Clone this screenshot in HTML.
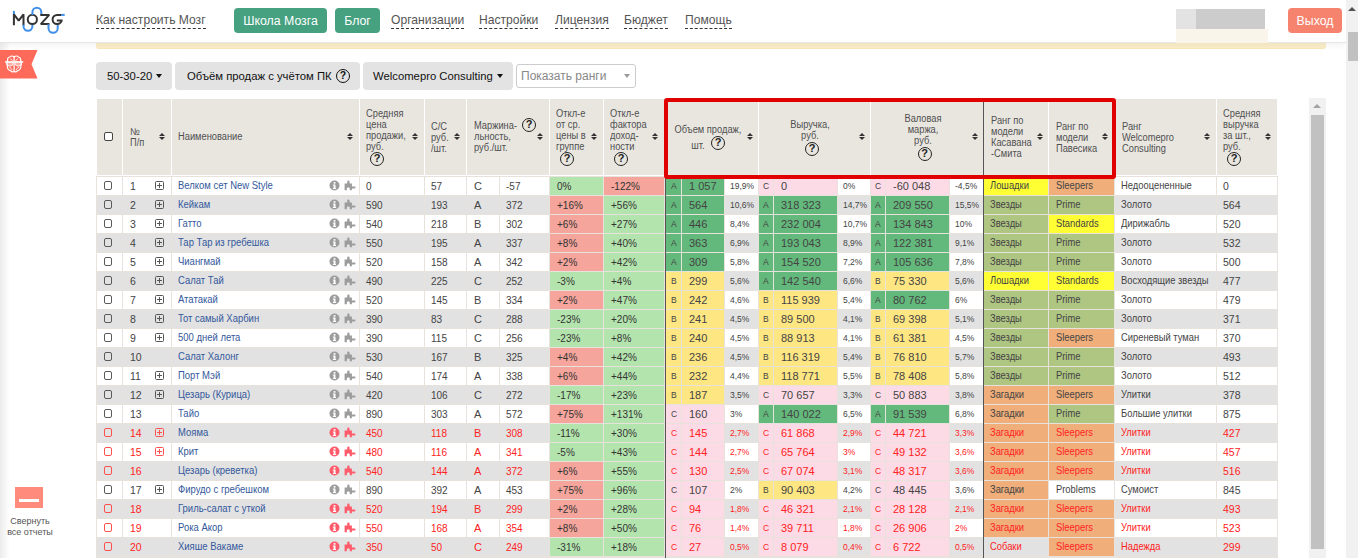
<!DOCTYPE html><html><head><meta charset="utf-8"><style>
*{margin:0;padding:0;box-sizing:border-box}
html,body{width:1358px;height:558px;overflow:hidden;background:#fff;font-family:"Liberation Sans", sans-serif;color:#444}
div{position:absolute}
.t{white-space:nowrap;line-height:1}
.q{width:14px;height:14px;border:1.4px solid #222;border-radius:50%;font-size:11px;font-weight:bold;line-height:11px;text-align:center;color:#222}
.s{width:7px;height:8px}
.s .su,.s .sd{position:absolute;left:0.5px;width:0;height:0;border-left:3px solid transparent;border-right:3px solid transparent}
.s .su{top:0;border-bottom:3.5px solid #333}
.s .sd{top:4px;border-top:3.5px solid #333}
.hd{font-size:10px;line-height:11px;color:#505050;white-space:nowrap;transform:scaleX(0.93);transform-origin:0 0}
.hdc{transform-origin:50% 0}
.cell{white-space:nowrap;line-height:19px}
</style></head><body>
<div style="position:absolute;left:0px;top:0px;width:1346px;height:43px;background:#fff;border-bottom:1px solid #e6e6e6;box-shadow:0 2px 7px rgba(0,0,0,0.06);z-index:5"></div>
<svg style="position:absolute;left:0;top:0;z-index:6" width="72" height="40" viewBox="0 0 72 40">
<g fill="none" stroke-linecap="butt" stroke-linejoin="miter" stroke-miterlimit="1.5">
<path d="M13.9 10.9 V14.6" stroke="#3f8fe8" stroke-width="2"/>
<path d="M13.9 25.2 V14.3 L18.7 20.6 L23.5 14.3 V25.2" stroke="#333" stroke-width="2"/>
<path d="M23.5 24.8 V26.3 A4.45 4.45 0 0 0 32.4 26.3 V24.2" stroke="#3f8fe8" stroke-width="2"/>
<circle cx="32.35" cy="19.45" r="4.6" stroke="#333" stroke-width="2"/>
<path d="M32.4 14.9 V12.2 A4.45 4.45 0 0 1 41.3 12.2 V15" stroke="#3f8fe8" stroke-width="2"/>
<path d="M40.3 14.9 H49.2 L40.8 24.1 H49.5" stroke="#333" stroke-width="2"/>
<path d="M48.5 24.2 V28.2 A4.6 4.6 0 0 0 57.7 28.2 V24" stroke="#3f8fe8" stroke-width="2"/>
<path d="M61.2 14.9 H57.1 A4.5 4.6 0 0 0 57.1 24.1 A4.5 4.6 0 0 0 61.6 19.5 V20.6 H56.8" stroke="#333" stroke-width="2"/>
<path d="M61 14.9 H64.7" stroke="#3f8fe8" stroke-width="2"/>
</g></svg>
<div class="t" style="left:96px;top:14px;font-size:12.1px;color:#555;z-index:6;border-bottom:1px dashed #333;padding-bottom:1px;line-height:13px">Как настроить Мозг</div>
<div style="position:absolute;left:234px;top:8px;width:93px;height:25px;background:#45a17f;border-radius:4px;z-index:6;color:#fff;font-size:12.3px;line-height:27px;text-align:center">Школа Мозга</div>
<div style="position:absolute;left:335px;top:8px;width:45px;height:25px;background:#45a17f;border-radius:4px;z-index:6;color:#fff;font-size:12.3px;line-height:27px;text-align:center">Блог</div>
<div class="t" style="left:391px;top:14px;font-size:12.1px;color:#555;z-index:6;border-bottom:1px dashed #333;padding-bottom:1px;line-height:13px">Организации</div>
<div class="t" style="left:479px;top:14px;font-size:12.1px;color:#555;z-index:6;border-bottom:1px dashed #333;padding-bottom:1px;line-height:13px">Настройки</div>
<div class="t" style="left:555px;top:14px;font-size:12.1px;color:#555;z-index:6;border-bottom:1px dashed #333;padding-bottom:1px;line-height:13px">Лицензия</div>
<div class="t" style="left:624px;top:14px;font-size:12.1px;color:#555;z-index:6;border-bottom:1px dashed #333;padding-bottom:1px;line-height:13px">Бюджет</div>
<div class="t" style="left:685px;top:14px;font-size:12.1px;color:#555;z-index:6;border-bottom:1px dashed #333;padding-bottom:1px;line-height:13px">Помощь</div>
<div style="position:absolute;left:1176px;top:9px;width:20px;height:20px;background:#e3e3e3;z-index:6"></div>
<div style="position:absolute;left:1196px;top:9px;width:69px;height:20px;background:#cccccc;z-index:6"></div>
<div style="position:absolute;left:1176px;top:29px;width:92px;height:16px;background:#faf5ea;z-index:6"></div>
<div style="position:absolute;left:1288px;top:8px;width:54px;height:25px;background:#f6836e;border-radius:4px;z-index:6;color:#fff;font-size:12.3px;line-height:27px;text-align:center">Выход</div>
<div style="position:absolute;left:0px;top:42px;width:10px;height:516px;background:linear-gradient(to right,#ececec,#fff)"></div>
<svg style="position:absolute;left:0;top:50px" width="38" height="29" viewBox="0 50 38 29">
<path d="M0 50 H37.5 L31.5 64.2 L37.5 78.5 H0 Z" fill="#fd6a5a"/>
<g fill="none" stroke="#fff" stroke-width="1.2">
<path d="M14.1 57 C13 55.8 10.8 55.6 9.8 57 C8.2 57.2 7.4 58.6 7.6 60.3 C6.8 61.3 6.6 63.8 7.3 65.6 C7.2 68.3 8.7 70.6 10.8 70.8 C12 72.2 13.4 72 14.1 71.3 C14.8 72 16.2 72.2 17.4 70.8 C19.5 70.6 21 68.3 20.9 65.6 C21.6 63.8 21.4 61.3 20.6 60.3 C20.8 58.6 20 57.2 18.4 57 C17.4 55.6 15.2 55.8 14.1 57 Z"/>
<path d="M14.1 57 V71.3"/>
<path d="M10.3 58.9 C11.5 59.1 12.2 59.9 12.4 61.1" stroke-width="0.9"/>
<path d="M17.9 58.9 C16.7 59.1 16 59.9 15.8 61.1" stroke-width="0.9"/>
<path d="M9.3 67.4 C10.7 67.6 11.7 68.7 11.9 70.1" stroke-width="0.9"/>
<path d="M18.9 67.4 C17.5 67.6 16.5 68.7 16.3 70.1" stroke-width="0.9"/>
<path d="M6.9 61.9 H12.9 V63.6 A2.4 2.4 0 0 1 10.5 66 H9.3 A2.4 2.4 0 0 1 6.9 63.6 Z" fill="#fff" fill-opacity="0.45" stroke-width="0.9"/>
<path d="M15.3 61.9 H21.3 V63.6 A2.4 2.4 0 0 1 18.9 66 H17.7 A2.4 2.4 0 0 1 15.3 63.6 Z" fill="#fff" fill-opacity="0.45" stroke-width="0.9"/>
<path d="M5 62 H23.3" stroke-width="1.4"/>
</g></svg>
<div style="position:absolute;left:15px;top:487px;width:28px;height:21px;background:#fe8b7c"></div>
<div style="position:absolute;left:19px;top:499px;width:20px;height:3px;background:#fff"></div>
<div style="left:5px;top:515px;width:50px;font-size:9.8px;line-height:11px;color:#555;text-align:center;transform:scaleX(0.92);transform-origin:50% 0">Свернуть<br>все отчеты</div>
<div style="position:absolute;left:96px;top:43px;width:1230px;height:6px;background:linear-gradient(#f1e4c0,#f8ebc6);border-bottom:1px solid #f5e6b8;border-radius:0 0 3px 3px;z-index:6"></div>
<div style="left:96px;top:62px;width:76px;height:28px;background:#e3e3e3;border-radius:4px;font-size:11.3px;line-height:28px;color:#111;white-space:nowrap"><span style="position:absolute;left:11px">50-30-20<span style="display:inline-block;width:0;height:0;border-left:3.5px solid transparent;border-right:3.5px solid transparent;border-top:4px solid #111;vertical-align:middle;margin-left:4px;margin-top:-2px"></span></span></div>
<div style="left:175px;top:62px;width:185px;height:28px;background:#e3e3e3;border-radius:4px;font-size:11.3px;line-height:28px;color:#111;white-space:nowrap"><span style="position:absolute;left:12px">Объём продаж с учётом ПК</span><div style="left:161px;top:7px;width:14px;height:14px;border:1.5px solid #111;border-radius:50%;font-size:10.5px;font-weight:bold;line-height:11px;text-align:center">?</div></div>
<div style="left:363px;top:62px;width:150px;height:28px;background:#e3e3e3;border-radius:4px;font-size:11.3px;line-height:28px;color:#111;white-space:nowrap"><span style="position:absolute;left:10px">Welcomepro Consulting<span style="display:inline-block;width:0;height:0;border-left:3.5px solid transparent;border-right:3.5px solid transparent;border-top:4px solid #111;vertical-align:middle;margin-left:4px;margin-top:-2px"></span></span></div>
<div style="left:516px;top:64px;width:120px;height:24px;border:1px solid #ccc;border-radius:3px;background:#fff;font-size:12px;line-height:22px;color:#888;padding-left:4px;white-space:nowrap">Показать ранги<span style="position:absolute;left:107px;top:9px;width:0;height:0;border-left:3.5px solid transparent;border-right:3.5px solid transparent;border-top:4px solid #999"></span></div>
<div style="position:absolute;left:97px;top:99px;width:1180px;height:76px;background:#e9e6e0"></div>
<div style="position:absolute;left:122px;top:99px;width:1px;height:76px;background:#fff"></div>
<div style="position:absolute;left:171px;top:99px;width:1px;height:76px;background:#fff"></div>
<div style="position:absolute;left:359px;top:99px;width:1px;height:76px;background:#fff"></div>
<div style="position:absolute;left:424px;top:99px;width:1px;height:76px;background:#fff"></div>
<div style="position:absolute;left:466px;top:99px;width:1px;height:76px;background:#fff"></div>
<div style="position:absolute;left:549px;top:99px;width:1px;height:76px;background:#fff"></div>
<div style="position:absolute;left:603px;top:99px;width:1px;height:76px;background:#fff"></div>
<div style="position:absolute;left:664px;top:99px;width:1px;height:76px;background:#fff"></div>
<div style="position:absolute;left:758px;top:99px;width:1px;height:76px;background:#fff"></div>
<div style="position:absolute;left:870px;top:99px;width:1px;height:76px;background:#fff"></div>
<div style="position:absolute;left:1048px;top:99px;width:1px;height:76px;background:#fff"></div>
<div style="position:absolute;left:1114px;top:99px;width:1px;height:76px;background:#fff"></div>
<div style="position:absolute;left:1216px;top:99px;width:1px;height:76px;background:#fff"></div>
<div style="position:absolute;left:665px;top:99px;width:1px;height:76px;background:#555"></div>
<div style="position:absolute;left:983px;top:99px;width:1px;height:76px;background:#555"></div>
<div style="position:absolute;left:97px;top:175px;width:1180px;height:1px;background:#fff"></div>
<div style="position:absolute;left:104px;top:132px;width:9px;height:9px;border:1px solid #444;border-radius:2px;background:#fff"></div>
<div class="hd" style="left:130px;top:126px;">№<br>П/п</div>
<div class="s" style="left:158.5px;top:133px"><i class="su"></i><i class="sd"></i></div>
<div class="hd" style="left:178px;top:131px;">Наименование</div>
<div class="s" style="left:346.5px;top:133px"><i class="su"></i><i class="sd"></i></div>
<div class="hd" style="left:366px;top:107.5px;">Средняя<br>цена<br>продажи,<br>руб.</div>
<div class="q" style="left:370px;top:152px">?</div>
<div class="s" style="left:411.5px;top:133px"><i class="su"></i><i class="sd"></i></div>
<div class="hd" style="left:431px;top:120.5px;">С/С<br>руб.<br>/шт.</div>
<div class="s" style="left:453.5px;top:133px"><i class="su"></i><i class="sd"></i></div>
<div class="hd" style="left:474px;top:119.5px;">Маржина-<br>льность,<br>руб./шт.</div>
<div class="q" style="left:522px;top:118px">?</div>
<div class="s" style="left:536.5px;top:133px"><i class="su"></i><i class="sd"></i></div>
<div class="hd" style="left:556px;top:107.5px;">Откл-е<br>от ср.<br>цены в<br>группе</div>
<div class="q" style="left:560px;top:152px">?</div>
<div class="s" style="left:590.5px;top:133px"><i class="su"></i><i class="sd"></i></div>
<div class="hd" style="left:610px;top:107.5px;">Откл-е<br>фактора<br>доход-<br>ности</div>
<div class="q" style="left:614px;top:152px">?</div>
<div class="s" style="left:651.5px;top:133px"><i class="su"></i><i class="sd"></i></div>
<div class="hd hdc" style="left:667.5px;top:122px;width:80px;text-align:center;line-height:16px">Объем продаж,<br>шт. <span style="display:inline-block;width:19px"></span></div>
<div class="q" style="left:711px;top:136px">?</div>
<div class="s" style="left:746.5px;top:133px"><i class="su"></i><i class="sd"></i></div>
<div class="hd hdc" style="left:763px;top:119px;width:94px;text-align:center">Выручка,<br>руб.</div>
<div class="q" style="left:805px;top:141.5px">?</div>
<div class="s" style="left:858.5px;top:133px"><i class="su"></i><i class="sd"></i></div>
<div class="hd hdc" style="left:871px;top:113px;width:104px;text-align:center">Валовая<br>маржа,<br>руб.</div>
<div class="q" style="left:917.5px;top:146.5px">?</div>
<div class="s" style="left:971.5px;top:133px"><i class="su"></i><i class="sd"></i></div>
<div class="hd" style="left:991px;top:115px;">Ранг по<br>модели<br>Касавана<br>-Смита</div>
<div class="s" style="left:1036.5px;top:133px"><i class="su"></i><i class="sd"></i></div>
<div class="hd" style="left:1056px;top:120.5px;">Ранг по<br>модели<br>Павесика</div>
<div class="s" style="left:1101.5px;top:133px"><i class="su"></i><i class="sd"></i></div>
<div class="hd" style="left:1122px;top:120.5px;">Ранг<br>Welcomepro<br>Consulting</div>
<div class="s" style="left:1203.5px;top:133px"><i class="su"></i><i class="sd"></i></div>
<div class="hd" style="left:1223px;top:107.5px;">Средняя<br>выручка<br>за шт.,<br>руб.</div>
<div class="q" style="left:1227px;top:152px">?</div>
<div class="s" style="left:1264.5px;top:133px"><i class="su"></i><i class="sd"></i></div>
<div style="position:absolute;left:96px;top:176px;width:1182px;height:19px;background:#fff"></div>
<div style="position:absolute;left:550px;top:177px;width:53px;height:18px;background:#b4e4ae"></div>
<div style="position:absolute;left:604px;top:177px;width:60px;height:18px;background:#f5a59b"></div>
<div style="position:absolute;left:666px;top:177px;width:15px;height:18px;background:#63b97b"></div>
<div style="position:absolute;left:682px;top:177px;width:42px;height:18px;background:#63b97b"></div>
<div style="position:absolute;left:759px;top:177px;width:14px;height:18px;background:#fddbe6"></div>
<div style="position:absolute;left:774px;top:177px;width:63px;height:18px;background:#fddbe6"></div>
<div style="position:absolute;left:871px;top:177px;width:14px;height:18px;background:#fddbe6"></div>
<div style="position:absolute;left:886px;top:177px;width:63px;height:18px;background:#fddbe6"></div>
<div style="position:absolute;left:984px;top:177px;width:64px;height:18px;background:#ffff33"></div>
<div style="position:absolute;left:1049px;top:177px;width:65px;height:18px;background:#f0ae7a"></div>
<div style="position:absolute;left:96px;top:176px;width:1px;height:19px;background:#e7e3dc"></div>
<div style="position:absolute;left:122px;top:176px;width:1px;height:19px;background:#e7e3dc"></div>
<div style="position:absolute;left:171px;top:176px;width:1px;height:19px;background:#e7e3dc"></div>
<div style="position:absolute;left:359px;top:176px;width:1px;height:19px;background:#e7e3dc"></div>
<div style="position:absolute;left:424px;top:176px;width:1px;height:19px;background:#e7e3dc"></div>
<div style="position:absolute;left:466px;top:176px;width:1px;height:19px;background:#e7e3dc"></div>
<div style="position:absolute;left:499px;top:176px;width:1px;height:19px;background:#e7e3dc"></div>
<div style="position:absolute;left:549px;top:176px;width:1px;height:19px;background:#e7e3dc"></div>
<div style="position:absolute;left:603px;top:176px;width:1px;height:19px;background:#e7e3dc"></div>
<div style="position:absolute;left:664px;top:176px;width:1px;height:19px;background:#e7e3dc"></div>
<div style="position:absolute;left:681px;top:176px;width:1px;height:19px;background:#e7e3dc"></div>
<div style="position:absolute;left:724px;top:176px;width:1px;height:19px;background:#e7e3dc"></div>
<div style="position:absolute;left:758px;top:176px;width:1px;height:19px;background:#e7e3dc"></div>
<div style="position:absolute;left:773px;top:176px;width:1px;height:19px;background:#e7e3dc"></div>
<div style="position:absolute;left:837px;top:176px;width:1px;height:19px;background:#e7e3dc"></div>
<div style="position:absolute;left:870px;top:176px;width:1px;height:19px;background:#e7e3dc"></div>
<div style="position:absolute;left:885px;top:176px;width:1px;height:19px;background:#e7e3dc"></div>
<div style="position:absolute;left:949px;top:176px;width:1px;height:19px;background:#e7e3dc"></div>
<div style="position:absolute;left:1048px;top:176px;width:1px;height:19px;background:#e7e3dc"></div>
<div style="position:absolute;left:1114px;top:176px;width:1px;height:19px;background:#e7e3dc"></div>
<div style="position:absolute;left:1216px;top:176px;width:1px;height:19px;background:#e7e3dc"></div>
<div style="position:absolute;left:1277px;top:176px;width:1px;height:19px;background:#e7e3dc"></div>
<div style="position:absolute;left:96px;top:176px;width:1182px;height:1px;background:#e7e3dc"></div>
<div style="position:absolute;left:665px;top:176px;width:1px;height:19px;background:#555"></div>
<div style="position:absolute;left:983px;top:176px;width:1px;height:19px;background:#555"></div>
<div style="position:absolute;left:103.5px;top:181px;width:8.5px;height:9px;border:1px solid #5a5a5a;border-radius:2px"></div>
<div class="cell" style="left:130px;top:177px;height:19px;font-size:10.5px;color:#444;">1</div>
<div style="left:155px;top:181px;width:9px;height:9px;border:1px solid #555;border-radius:1.5px"><div style="left:1px;top:3px;width:5px;height:1px;background:#555"></div><div style="left:3px;top:1px;width:1px;height:5px;background:#555"></div></div>
<div class="cell" style="left:178px;top:176px;height:19px;font-size:10.2px;color:#33589c;transform:scaleX(0.93);transform-origin:0 0">Велком сет New Style</div>
<svg style="position:absolute;left:329px;top:180px" width="11" height="11" viewBox="0 0 11 11"><circle cx="5.5" cy="5.5" r="5" fill="#9c9c9c"/><rect x="4.6" y="2.1" width="1.9" height="1.6" fill="#fff"/><path d="M3.9 4.5 H6.5 V7.9 H7.1 V9 H3.9 V7.9 H4.6 V5.5 H3.9 Z" fill="#fff"/></svg>
<svg style="position:absolute;left:344px;top:178.5px" width="12" height="12" viewBox="0 0 12 12"><path d="M0.6 4.5 H3.2 V2.8 A1.2 1.2 0 0 1 5.6 2.8 V4.5 H7.9 V7.5 H10.5 A1 1 0 0 1 10.5 9.5 H7.9 V11.3 H5.8 V9.8 A1.5 1.5 0 0 0 2.8 9.8 V11.3 H0.6 Z" fill="#9c9c9c"/></svg>
<div class="cell" style="left:366px;top:177px;height:19px;font-size:10px;color:#444;">0</div>
<div class="cell" style="left:431px;top:177px;height:19px;font-size:10px;color:#444;">57</div>
<div class="cell" style="left:474px;top:177px;height:19px;font-size:11px;color:#444;">C</div>
<div class="cell" style="left:506px;top:177px;height:19px;font-size:10px;color:#444;">-57</div>
<div class="cell" style="left:557px;top:177px;height:19px;font-size:10px;color:#333;">0%</div>
<div class="cell" style="left:611px;top:177px;height:19px;font-size:10px;color:#333;">-122%</div>
<div class="cell" style="left:671px;top:177px;height:19px;font-size:8.5px;color:#444;">A</div>
<div class="cell" style="left:689px;top:177px;height:19px;font-size:11px;color:#444;">1 057</div>
<div class="cell" style="left:730px;top:177px;height:19px;font-size:8.5px;color:#444;">19,9%</div>
<div class="cell" style="left:763px;top:177px;height:19px;font-size:8.5px;color:#444;">C</div>
<div class="cell" style="left:781px;top:177px;height:19px;font-size:11px;color:#444;">0</div>
<div class="cell" style="left:843px;top:177px;height:19px;font-size:8.5px;color:#444;">0%</div>
<div class="cell" style="left:875px;top:177px;height:19px;font-size:8.5px;color:#444;">C</div>
<div class="cell" style="left:893px;top:177px;height:19px;font-size:11px;color:#444;">-60 048</div>
<div class="cell" style="left:955px;top:177px;height:19px;font-size:8.5px;color:#444;">-4,5%</div>
<div class="cell" style="left:990px;top:176px;height:19px;font-size:10.2px;color:#444;transform:scaleX(0.92);transform-origin:0 0">Лошадки</div>
<div class="cell" style="left:1056px;top:176px;height:19px;font-size:10.2px;color:#444;transform:scaleX(0.92);transform-origin:0 0">Sleepers</div>
<div class="cell" style="left:1121px;top:176px;height:19px;font-size:10.2px;color:#444;transform:scaleX(0.92);transform-origin:0 0">Недооцененные</div>
<div class="cell" style="left:1223px;top:177px;height:19px;font-size:10.5px;color:#444;">0</div>
<div style="position:absolute;left:96px;top:195px;width:1182px;height:19px;background:#e2e2e2"></div>
<div style="position:absolute;left:550px;top:196px;width:53px;height:18px;background:#f5a59b"></div>
<div style="position:absolute;left:604px;top:196px;width:60px;height:18px;background:#b4e4ae"></div>
<div style="position:absolute;left:666px;top:196px;width:15px;height:18px;background:#63b97b"></div>
<div style="position:absolute;left:682px;top:196px;width:42px;height:18px;background:#63b97b"></div>
<div style="position:absolute;left:759px;top:196px;width:14px;height:18px;background:#63b97b"></div>
<div style="position:absolute;left:774px;top:196px;width:63px;height:18px;background:#63b97b"></div>
<div style="position:absolute;left:871px;top:196px;width:14px;height:18px;background:#63b97b"></div>
<div style="position:absolute;left:886px;top:196px;width:63px;height:18px;background:#63b97b"></div>
<div style="position:absolute;left:984px;top:196px;width:64px;height:18px;background:#afc683"></div>
<div style="position:absolute;left:1049px;top:196px;width:65px;height:18px;background:#afc683"></div>
<div style="position:absolute;left:96px;top:195px;width:1px;height:19px;background:#e7e3dc"></div>
<div style="position:absolute;left:122px;top:195px;width:1px;height:19px;background:#e7e3dc"></div>
<div style="position:absolute;left:171px;top:195px;width:1px;height:19px;background:#e7e3dc"></div>
<div style="position:absolute;left:359px;top:195px;width:1px;height:19px;background:#e7e3dc"></div>
<div style="position:absolute;left:424px;top:195px;width:1px;height:19px;background:#e7e3dc"></div>
<div style="position:absolute;left:466px;top:195px;width:1px;height:19px;background:#e7e3dc"></div>
<div style="position:absolute;left:499px;top:195px;width:1px;height:19px;background:#e7e3dc"></div>
<div style="position:absolute;left:549px;top:195px;width:1px;height:19px;background:#e7e3dc"></div>
<div style="position:absolute;left:603px;top:195px;width:1px;height:19px;background:#e7e3dc"></div>
<div style="position:absolute;left:664px;top:195px;width:1px;height:19px;background:#e7e3dc"></div>
<div style="position:absolute;left:681px;top:195px;width:1px;height:19px;background:#e7e3dc"></div>
<div style="position:absolute;left:724px;top:195px;width:1px;height:19px;background:#e7e3dc"></div>
<div style="position:absolute;left:758px;top:195px;width:1px;height:19px;background:#e7e3dc"></div>
<div style="position:absolute;left:773px;top:195px;width:1px;height:19px;background:#e7e3dc"></div>
<div style="position:absolute;left:837px;top:195px;width:1px;height:19px;background:#e7e3dc"></div>
<div style="position:absolute;left:870px;top:195px;width:1px;height:19px;background:#e7e3dc"></div>
<div style="position:absolute;left:885px;top:195px;width:1px;height:19px;background:#e7e3dc"></div>
<div style="position:absolute;left:949px;top:195px;width:1px;height:19px;background:#e7e3dc"></div>
<div style="position:absolute;left:1048px;top:195px;width:1px;height:19px;background:#e7e3dc"></div>
<div style="position:absolute;left:1114px;top:195px;width:1px;height:19px;background:#e7e3dc"></div>
<div style="position:absolute;left:1216px;top:195px;width:1px;height:19px;background:#e7e3dc"></div>
<div style="position:absolute;left:1277px;top:195px;width:1px;height:19px;background:#e7e3dc"></div>
<div style="position:absolute;left:96px;top:195px;width:1182px;height:1px;background:#e7e3dc"></div>
<div style="position:absolute;left:665px;top:195px;width:1px;height:19px;background:#555"></div>
<div style="position:absolute;left:983px;top:195px;width:1px;height:19px;background:#555"></div>
<div style="position:absolute;left:103.5px;top:200px;width:8.5px;height:9px;border:1px solid #5a5a5a;border-radius:2px"></div>
<div class="cell" style="left:130px;top:196px;height:19px;font-size:10.5px;color:#444;">2</div>
<div style="left:155px;top:200px;width:9px;height:9px;border:1px solid #555;border-radius:1.5px"><div style="left:1px;top:3px;width:5px;height:1px;background:#555"></div><div style="left:3px;top:1px;width:1px;height:5px;background:#555"></div></div>
<div class="cell" style="left:178px;top:195px;height:19px;font-size:10.2px;color:#33589c;transform:scaleX(0.93);transform-origin:0 0">Кейкам</div>
<svg style="position:absolute;left:329px;top:199px" width="11" height="11" viewBox="0 0 11 11"><circle cx="5.5" cy="5.5" r="5" fill="#9c9c9c"/><rect x="4.6" y="2.1" width="1.9" height="1.6" fill="#fff"/><path d="M3.9 4.5 H6.5 V7.9 H7.1 V9 H3.9 V7.9 H4.6 V5.5 H3.9 Z" fill="#fff"/></svg>
<svg style="position:absolute;left:344px;top:197.5px" width="12" height="12" viewBox="0 0 12 12"><path d="M0.6 4.5 H3.2 V2.8 A1.2 1.2 0 0 1 5.6 2.8 V4.5 H7.9 V7.5 H10.5 A1 1 0 0 1 10.5 9.5 H7.9 V11.3 H5.8 V9.8 A1.5 1.5 0 0 0 2.8 9.8 V11.3 H0.6 Z" fill="#9c9c9c"/></svg>
<div class="cell" style="left:366px;top:196px;height:19px;font-size:10px;color:#444;">590</div>
<div class="cell" style="left:431px;top:196px;height:19px;font-size:10px;color:#444;">193</div>
<div class="cell" style="left:474px;top:196px;height:19px;font-size:11px;color:#444;">A</div>
<div class="cell" style="left:506px;top:196px;height:19px;font-size:10px;color:#444;">372</div>
<div class="cell" style="left:557px;top:196px;height:19px;font-size:10px;color:#333;">+16%</div>
<div class="cell" style="left:611px;top:196px;height:19px;font-size:10px;color:#333;">+56%</div>
<div class="cell" style="left:671px;top:196px;height:19px;font-size:8.5px;color:#444;">A</div>
<div class="cell" style="left:689px;top:196px;height:19px;font-size:11px;color:#444;">564</div>
<div class="cell" style="left:730px;top:196px;height:19px;font-size:8.5px;color:#444;">10,6%</div>
<div class="cell" style="left:763px;top:196px;height:19px;font-size:8.5px;color:#444;">A</div>
<div class="cell" style="left:781px;top:196px;height:19px;font-size:11px;color:#444;">318 323</div>
<div class="cell" style="left:843px;top:196px;height:19px;font-size:8.5px;color:#444;">14,7%</div>
<div class="cell" style="left:875px;top:196px;height:19px;font-size:8.5px;color:#444;">A</div>
<div class="cell" style="left:893px;top:196px;height:19px;font-size:11px;color:#444;">209 550</div>
<div class="cell" style="left:955px;top:196px;height:19px;font-size:8.5px;color:#444;">15,5%</div>
<div class="cell" style="left:990px;top:195px;height:19px;font-size:10.2px;color:#444;transform:scaleX(0.92);transform-origin:0 0">Звезды</div>
<div class="cell" style="left:1056px;top:195px;height:19px;font-size:10.2px;color:#444;transform:scaleX(0.92);transform-origin:0 0">Prime</div>
<div class="cell" style="left:1121px;top:195px;height:19px;font-size:10.2px;color:#444;transform:scaleX(0.92);transform-origin:0 0">Золото</div>
<div class="cell" style="left:1223px;top:196px;height:19px;font-size:10.5px;color:#444;">564</div>
<div style="position:absolute;left:96px;top:214px;width:1182px;height:19px;background:#fff"></div>
<div style="position:absolute;left:550px;top:215px;width:53px;height:18px;background:#f5a59b"></div>
<div style="position:absolute;left:604px;top:215px;width:60px;height:18px;background:#b4e4ae"></div>
<div style="position:absolute;left:666px;top:215px;width:15px;height:18px;background:#63b97b"></div>
<div style="position:absolute;left:682px;top:215px;width:42px;height:18px;background:#63b97b"></div>
<div style="position:absolute;left:759px;top:215px;width:14px;height:18px;background:#63b97b"></div>
<div style="position:absolute;left:774px;top:215px;width:63px;height:18px;background:#63b97b"></div>
<div style="position:absolute;left:871px;top:215px;width:14px;height:18px;background:#63b97b"></div>
<div style="position:absolute;left:886px;top:215px;width:63px;height:18px;background:#63b97b"></div>
<div style="position:absolute;left:984px;top:215px;width:64px;height:18px;background:#afc683"></div>
<div style="position:absolute;left:1049px;top:215px;width:65px;height:18px;background:#ffff33"></div>
<div style="position:absolute;left:96px;top:214px;width:1px;height:19px;background:#e7e3dc"></div>
<div style="position:absolute;left:122px;top:214px;width:1px;height:19px;background:#e7e3dc"></div>
<div style="position:absolute;left:171px;top:214px;width:1px;height:19px;background:#e7e3dc"></div>
<div style="position:absolute;left:359px;top:214px;width:1px;height:19px;background:#e7e3dc"></div>
<div style="position:absolute;left:424px;top:214px;width:1px;height:19px;background:#e7e3dc"></div>
<div style="position:absolute;left:466px;top:214px;width:1px;height:19px;background:#e7e3dc"></div>
<div style="position:absolute;left:499px;top:214px;width:1px;height:19px;background:#e7e3dc"></div>
<div style="position:absolute;left:549px;top:214px;width:1px;height:19px;background:#e7e3dc"></div>
<div style="position:absolute;left:603px;top:214px;width:1px;height:19px;background:#e7e3dc"></div>
<div style="position:absolute;left:664px;top:214px;width:1px;height:19px;background:#e7e3dc"></div>
<div style="position:absolute;left:681px;top:214px;width:1px;height:19px;background:#e7e3dc"></div>
<div style="position:absolute;left:724px;top:214px;width:1px;height:19px;background:#e7e3dc"></div>
<div style="position:absolute;left:758px;top:214px;width:1px;height:19px;background:#e7e3dc"></div>
<div style="position:absolute;left:773px;top:214px;width:1px;height:19px;background:#e7e3dc"></div>
<div style="position:absolute;left:837px;top:214px;width:1px;height:19px;background:#e7e3dc"></div>
<div style="position:absolute;left:870px;top:214px;width:1px;height:19px;background:#e7e3dc"></div>
<div style="position:absolute;left:885px;top:214px;width:1px;height:19px;background:#e7e3dc"></div>
<div style="position:absolute;left:949px;top:214px;width:1px;height:19px;background:#e7e3dc"></div>
<div style="position:absolute;left:1048px;top:214px;width:1px;height:19px;background:#e7e3dc"></div>
<div style="position:absolute;left:1114px;top:214px;width:1px;height:19px;background:#e7e3dc"></div>
<div style="position:absolute;left:1216px;top:214px;width:1px;height:19px;background:#e7e3dc"></div>
<div style="position:absolute;left:1277px;top:214px;width:1px;height:19px;background:#e7e3dc"></div>
<div style="position:absolute;left:96px;top:214px;width:1182px;height:1px;background:#e7e3dc"></div>
<div style="position:absolute;left:665px;top:214px;width:1px;height:19px;background:#555"></div>
<div style="position:absolute;left:983px;top:214px;width:1px;height:19px;background:#555"></div>
<div style="position:absolute;left:103.5px;top:219px;width:8.5px;height:9px;border:1px solid #5a5a5a;border-radius:2px"></div>
<div class="cell" style="left:130px;top:215px;height:19px;font-size:10.5px;color:#444;">3</div>
<div style="left:155px;top:219px;width:9px;height:9px;border:1px solid #555;border-radius:1.5px"><div style="left:1px;top:3px;width:5px;height:1px;background:#555"></div><div style="left:3px;top:1px;width:1px;height:5px;background:#555"></div></div>
<div class="cell" style="left:178px;top:214px;height:19px;font-size:10.2px;color:#33589c;transform:scaleX(0.93);transform-origin:0 0">Гатто</div>
<svg style="position:absolute;left:329px;top:218px" width="11" height="11" viewBox="0 0 11 11"><circle cx="5.5" cy="5.5" r="5" fill="#9c9c9c"/><rect x="4.6" y="2.1" width="1.9" height="1.6" fill="#fff"/><path d="M3.9 4.5 H6.5 V7.9 H7.1 V9 H3.9 V7.9 H4.6 V5.5 H3.9 Z" fill="#fff"/></svg>
<svg style="position:absolute;left:344px;top:216.5px" width="12" height="12" viewBox="0 0 12 12"><path d="M0.6 4.5 H3.2 V2.8 A1.2 1.2 0 0 1 5.6 2.8 V4.5 H7.9 V7.5 H10.5 A1 1 0 0 1 10.5 9.5 H7.9 V11.3 H5.8 V9.8 A1.5 1.5 0 0 0 2.8 9.8 V11.3 H0.6 Z" fill="#9c9c9c"/></svg>
<div class="cell" style="left:366px;top:215px;height:19px;font-size:10px;color:#444;">540</div>
<div class="cell" style="left:431px;top:215px;height:19px;font-size:10px;color:#444;">218</div>
<div class="cell" style="left:474px;top:215px;height:19px;font-size:11px;color:#444;">B</div>
<div class="cell" style="left:506px;top:215px;height:19px;font-size:10px;color:#444;">302</div>
<div class="cell" style="left:557px;top:215px;height:19px;font-size:10px;color:#333;">+6%</div>
<div class="cell" style="left:611px;top:215px;height:19px;font-size:10px;color:#333;">+27%</div>
<div class="cell" style="left:671px;top:215px;height:19px;font-size:8.5px;color:#444;">A</div>
<div class="cell" style="left:689px;top:215px;height:19px;font-size:11px;color:#444;">446</div>
<div class="cell" style="left:730px;top:215px;height:19px;font-size:8.5px;color:#444;">8,4%</div>
<div class="cell" style="left:763px;top:215px;height:19px;font-size:8.5px;color:#444;">A</div>
<div class="cell" style="left:781px;top:215px;height:19px;font-size:11px;color:#444;">232 004</div>
<div class="cell" style="left:843px;top:215px;height:19px;font-size:8.5px;color:#444;">10,7%</div>
<div class="cell" style="left:875px;top:215px;height:19px;font-size:8.5px;color:#444;">A</div>
<div class="cell" style="left:893px;top:215px;height:19px;font-size:11px;color:#444;">134 843</div>
<div class="cell" style="left:955px;top:215px;height:19px;font-size:8.5px;color:#444;">10%</div>
<div class="cell" style="left:990px;top:214px;height:19px;font-size:10.2px;color:#444;transform:scaleX(0.92);transform-origin:0 0">Звезды</div>
<div class="cell" style="left:1056px;top:214px;height:19px;font-size:10.2px;color:#444;transform:scaleX(0.92);transform-origin:0 0">Standards</div>
<div class="cell" style="left:1121px;top:214px;height:19px;font-size:10.2px;color:#444;transform:scaleX(0.92);transform-origin:0 0">Дирижабль</div>
<div class="cell" style="left:1223px;top:215px;height:19px;font-size:10.5px;color:#444;">520</div>
<div style="position:absolute;left:96px;top:233px;width:1182px;height:19px;background:#e2e2e2"></div>
<div style="position:absolute;left:550px;top:234px;width:53px;height:18px;background:#f5a59b"></div>
<div style="position:absolute;left:604px;top:234px;width:60px;height:18px;background:#b4e4ae"></div>
<div style="position:absolute;left:666px;top:234px;width:15px;height:18px;background:#63b97b"></div>
<div style="position:absolute;left:682px;top:234px;width:42px;height:18px;background:#63b97b"></div>
<div style="position:absolute;left:759px;top:234px;width:14px;height:18px;background:#63b97b"></div>
<div style="position:absolute;left:774px;top:234px;width:63px;height:18px;background:#63b97b"></div>
<div style="position:absolute;left:871px;top:234px;width:14px;height:18px;background:#63b97b"></div>
<div style="position:absolute;left:886px;top:234px;width:63px;height:18px;background:#63b97b"></div>
<div style="position:absolute;left:984px;top:234px;width:64px;height:18px;background:#afc683"></div>
<div style="position:absolute;left:1049px;top:234px;width:65px;height:18px;background:#afc683"></div>
<div style="position:absolute;left:96px;top:233px;width:1px;height:19px;background:#e7e3dc"></div>
<div style="position:absolute;left:122px;top:233px;width:1px;height:19px;background:#e7e3dc"></div>
<div style="position:absolute;left:171px;top:233px;width:1px;height:19px;background:#e7e3dc"></div>
<div style="position:absolute;left:359px;top:233px;width:1px;height:19px;background:#e7e3dc"></div>
<div style="position:absolute;left:424px;top:233px;width:1px;height:19px;background:#e7e3dc"></div>
<div style="position:absolute;left:466px;top:233px;width:1px;height:19px;background:#e7e3dc"></div>
<div style="position:absolute;left:499px;top:233px;width:1px;height:19px;background:#e7e3dc"></div>
<div style="position:absolute;left:549px;top:233px;width:1px;height:19px;background:#e7e3dc"></div>
<div style="position:absolute;left:603px;top:233px;width:1px;height:19px;background:#e7e3dc"></div>
<div style="position:absolute;left:664px;top:233px;width:1px;height:19px;background:#e7e3dc"></div>
<div style="position:absolute;left:681px;top:233px;width:1px;height:19px;background:#e7e3dc"></div>
<div style="position:absolute;left:724px;top:233px;width:1px;height:19px;background:#e7e3dc"></div>
<div style="position:absolute;left:758px;top:233px;width:1px;height:19px;background:#e7e3dc"></div>
<div style="position:absolute;left:773px;top:233px;width:1px;height:19px;background:#e7e3dc"></div>
<div style="position:absolute;left:837px;top:233px;width:1px;height:19px;background:#e7e3dc"></div>
<div style="position:absolute;left:870px;top:233px;width:1px;height:19px;background:#e7e3dc"></div>
<div style="position:absolute;left:885px;top:233px;width:1px;height:19px;background:#e7e3dc"></div>
<div style="position:absolute;left:949px;top:233px;width:1px;height:19px;background:#e7e3dc"></div>
<div style="position:absolute;left:1048px;top:233px;width:1px;height:19px;background:#e7e3dc"></div>
<div style="position:absolute;left:1114px;top:233px;width:1px;height:19px;background:#e7e3dc"></div>
<div style="position:absolute;left:1216px;top:233px;width:1px;height:19px;background:#e7e3dc"></div>
<div style="position:absolute;left:1277px;top:233px;width:1px;height:19px;background:#e7e3dc"></div>
<div style="position:absolute;left:96px;top:233px;width:1182px;height:1px;background:#e7e3dc"></div>
<div style="position:absolute;left:665px;top:233px;width:1px;height:19px;background:#555"></div>
<div style="position:absolute;left:983px;top:233px;width:1px;height:19px;background:#555"></div>
<div style="position:absolute;left:103.5px;top:238px;width:8.5px;height:9px;border:1px solid #5a5a5a;border-radius:2px"></div>
<div class="cell" style="left:130px;top:234px;height:19px;font-size:10.5px;color:#444;">4</div>
<div style="left:155px;top:238px;width:9px;height:9px;border:1px solid #555;border-radius:1.5px"><div style="left:1px;top:3px;width:5px;height:1px;background:#555"></div><div style="left:3px;top:1px;width:1px;height:5px;background:#555"></div></div>
<div class="cell" style="left:178px;top:233px;height:19px;font-size:10.2px;color:#33589c;transform:scaleX(0.93);transform-origin:0 0">Тар Тар из гребешка</div>
<svg style="position:absolute;left:329px;top:237px" width="11" height="11" viewBox="0 0 11 11"><circle cx="5.5" cy="5.5" r="5" fill="#9c9c9c"/><rect x="4.6" y="2.1" width="1.9" height="1.6" fill="#fff"/><path d="M3.9 4.5 H6.5 V7.9 H7.1 V9 H3.9 V7.9 H4.6 V5.5 H3.9 Z" fill="#fff"/></svg>
<svg style="position:absolute;left:344px;top:235.5px" width="12" height="12" viewBox="0 0 12 12"><path d="M0.6 4.5 H3.2 V2.8 A1.2 1.2 0 0 1 5.6 2.8 V4.5 H7.9 V7.5 H10.5 A1 1 0 0 1 10.5 9.5 H7.9 V11.3 H5.8 V9.8 A1.5 1.5 0 0 0 2.8 9.8 V11.3 H0.6 Z" fill="#9c9c9c"/></svg>
<div class="cell" style="left:366px;top:234px;height:19px;font-size:10px;color:#444;">550</div>
<div class="cell" style="left:431px;top:234px;height:19px;font-size:10px;color:#444;">195</div>
<div class="cell" style="left:474px;top:234px;height:19px;font-size:11px;color:#444;">A</div>
<div class="cell" style="left:506px;top:234px;height:19px;font-size:10px;color:#444;">337</div>
<div class="cell" style="left:557px;top:234px;height:19px;font-size:10px;color:#333;">+8%</div>
<div class="cell" style="left:611px;top:234px;height:19px;font-size:10px;color:#333;">+40%</div>
<div class="cell" style="left:671px;top:234px;height:19px;font-size:8.5px;color:#444;">A</div>
<div class="cell" style="left:689px;top:234px;height:19px;font-size:11px;color:#444;">363</div>
<div class="cell" style="left:730px;top:234px;height:19px;font-size:8.5px;color:#444;">6,9%</div>
<div class="cell" style="left:763px;top:234px;height:19px;font-size:8.5px;color:#444;">A</div>
<div class="cell" style="left:781px;top:234px;height:19px;font-size:11px;color:#444;">193 043</div>
<div class="cell" style="left:843px;top:234px;height:19px;font-size:8.5px;color:#444;">8,9%</div>
<div class="cell" style="left:875px;top:234px;height:19px;font-size:8.5px;color:#444;">A</div>
<div class="cell" style="left:893px;top:234px;height:19px;font-size:11px;color:#444;">122 381</div>
<div class="cell" style="left:955px;top:234px;height:19px;font-size:8.5px;color:#444;">9,1%</div>
<div class="cell" style="left:990px;top:233px;height:19px;font-size:10.2px;color:#444;transform:scaleX(0.92);transform-origin:0 0">Звезды</div>
<div class="cell" style="left:1056px;top:233px;height:19px;font-size:10.2px;color:#444;transform:scaleX(0.92);transform-origin:0 0">Prime</div>
<div class="cell" style="left:1121px;top:233px;height:19px;font-size:10.2px;color:#444;transform:scaleX(0.92);transform-origin:0 0">Золото</div>
<div class="cell" style="left:1223px;top:234px;height:19px;font-size:10.5px;color:#444;">532</div>
<div style="position:absolute;left:96px;top:252px;width:1182px;height:19px;background:#fff"></div>
<div style="position:absolute;left:550px;top:253px;width:53px;height:18px;background:#f5a59b"></div>
<div style="position:absolute;left:604px;top:253px;width:60px;height:18px;background:#b4e4ae"></div>
<div style="position:absolute;left:666px;top:253px;width:15px;height:18px;background:#63b97b"></div>
<div style="position:absolute;left:682px;top:253px;width:42px;height:18px;background:#63b97b"></div>
<div style="position:absolute;left:759px;top:253px;width:14px;height:18px;background:#63b97b"></div>
<div style="position:absolute;left:774px;top:253px;width:63px;height:18px;background:#63b97b"></div>
<div style="position:absolute;left:871px;top:253px;width:14px;height:18px;background:#63b97b"></div>
<div style="position:absolute;left:886px;top:253px;width:63px;height:18px;background:#63b97b"></div>
<div style="position:absolute;left:984px;top:253px;width:64px;height:18px;background:#afc683"></div>
<div style="position:absolute;left:1049px;top:253px;width:65px;height:18px;background:#afc683"></div>
<div style="position:absolute;left:96px;top:252px;width:1px;height:19px;background:#e7e3dc"></div>
<div style="position:absolute;left:122px;top:252px;width:1px;height:19px;background:#e7e3dc"></div>
<div style="position:absolute;left:171px;top:252px;width:1px;height:19px;background:#e7e3dc"></div>
<div style="position:absolute;left:359px;top:252px;width:1px;height:19px;background:#e7e3dc"></div>
<div style="position:absolute;left:424px;top:252px;width:1px;height:19px;background:#e7e3dc"></div>
<div style="position:absolute;left:466px;top:252px;width:1px;height:19px;background:#e7e3dc"></div>
<div style="position:absolute;left:499px;top:252px;width:1px;height:19px;background:#e7e3dc"></div>
<div style="position:absolute;left:549px;top:252px;width:1px;height:19px;background:#e7e3dc"></div>
<div style="position:absolute;left:603px;top:252px;width:1px;height:19px;background:#e7e3dc"></div>
<div style="position:absolute;left:664px;top:252px;width:1px;height:19px;background:#e7e3dc"></div>
<div style="position:absolute;left:681px;top:252px;width:1px;height:19px;background:#e7e3dc"></div>
<div style="position:absolute;left:724px;top:252px;width:1px;height:19px;background:#e7e3dc"></div>
<div style="position:absolute;left:758px;top:252px;width:1px;height:19px;background:#e7e3dc"></div>
<div style="position:absolute;left:773px;top:252px;width:1px;height:19px;background:#e7e3dc"></div>
<div style="position:absolute;left:837px;top:252px;width:1px;height:19px;background:#e7e3dc"></div>
<div style="position:absolute;left:870px;top:252px;width:1px;height:19px;background:#e7e3dc"></div>
<div style="position:absolute;left:885px;top:252px;width:1px;height:19px;background:#e7e3dc"></div>
<div style="position:absolute;left:949px;top:252px;width:1px;height:19px;background:#e7e3dc"></div>
<div style="position:absolute;left:1048px;top:252px;width:1px;height:19px;background:#e7e3dc"></div>
<div style="position:absolute;left:1114px;top:252px;width:1px;height:19px;background:#e7e3dc"></div>
<div style="position:absolute;left:1216px;top:252px;width:1px;height:19px;background:#e7e3dc"></div>
<div style="position:absolute;left:1277px;top:252px;width:1px;height:19px;background:#e7e3dc"></div>
<div style="position:absolute;left:96px;top:252px;width:1182px;height:1px;background:#e7e3dc"></div>
<div style="position:absolute;left:665px;top:252px;width:1px;height:19px;background:#555"></div>
<div style="position:absolute;left:983px;top:252px;width:1px;height:19px;background:#555"></div>
<div style="position:absolute;left:103.5px;top:257px;width:8.5px;height:9px;border:1px solid #5a5a5a;border-radius:2px"></div>
<div class="cell" style="left:130px;top:253px;height:19px;font-size:10.5px;color:#444;">5</div>
<div style="left:155px;top:257px;width:9px;height:9px;border:1px solid #555;border-radius:1.5px"><div style="left:1px;top:3px;width:5px;height:1px;background:#555"></div><div style="left:3px;top:1px;width:1px;height:5px;background:#555"></div></div>
<div class="cell" style="left:178px;top:252px;height:19px;font-size:10.2px;color:#33589c;transform:scaleX(0.93);transform-origin:0 0">Чиангмай</div>
<svg style="position:absolute;left:329px;top:256px" width="11" height="11" viewBox="0 0 11 11"><circle cx="5.5" cy="5.5" r="5" fill="#9c9c9c"/><rect x="4.6" y="2.1" width="1.9" height="1.6" fill="#fff"/><path d="M3.9 4.5 H6.5 V7.9 H7.1 V9 H3.9 V7.9 H4.6 V5.5 H3.9 Z" fill="#fff"/></svg>
<svg style="position:absolute;left:344px;top:254.5px" width="12" height="12" viewBox="0 0 12 12"><path d="M0.6 4.5 H3.2 V2.8 A1.2 1.2 0 0 1 5.6 2.8 V4.5 H7.9 V7.5 H10.5 A1 1 0 0 1 10.5 9.5 H7.9 V11.3 H5.8 V9.8 A1.5 1.5 0 0 0 2.8 9.8 V11.3 H0.6 Z" fill="#9c9c9c"/></svg>
<div class="cell" style="left:366px;top:253px;height:19px;font-size:10px;color:#444;">520</div>
<div class="cell" style="left:431px;top:253px;height:19px;font-size:10px;color:#444;">158</div>
<div class="cell" style="left:474px;top:253px;height:19px;font-size:11px;color:#444;">A</div>
<div class="cell" style="left:506px;top:253px;height:19px;font-size:10px;color:#444;">342</div>
<div class="cell" style="left:557px;top:253px;height:19px;font-size:10px;color:#333;">+2%</div>
<div class="cell" style="left:611px;top:253px;height:19px;font-size:10px;color:#333;">+42%</div>
<div class="cell" style="left:671px;top:253px;height:19px;font-size:8.5px;color:#444;">A</div>
<div class="cell" style="left:689px;top:253px;height:19px;font-size:11px;color:#444;">309</div>
<div class="cell" style="left:730px;top:253px;height:19px;font-size:8.5px;color:#444;">5,8%</div>
<div class="cell" style="left:763px;top:253px;height:19px;font-size:8.5px;color:#444;">A</div>
<div class="cell" style="left:781px;top:253px;height:19px;font-size:11px;color:#444;">154 520</div>
<div class="cell" style="left:843px;top:253px;height:19px;font-size:8.5px;color:#444;">7,2%</div>
<div class="cell" style="left:875px;top:253px;height:19px;font-size:8.5px;color:#444;">A</div>
<div class="cell" style="left:893px;top:253px;height:19px;font-size:11px;color:#444;">105 636</div>
<div class="cell" style="left:955px;top:253px;height:19px;font-size:8.5px;color:#444;">7,8%</div>
<div class="cell" style="left:990px;top:252px;height:19px;font-size:10.2px;color:#444;transform:scaleX(0.92);transform-origin:0 0">Звезды</div>
<div class="cell" style="left:1056px;top:252px;height:19px;font-size:10.2px;color:#444;transform:scaleX(0.92);transform-origin:0 0">Prime</div>
<div class="cell" style="left:1121px;top:252px;height:19px;font-size:10.2px;color:#444;transform:scaleX(0.92);transform-origin:0 0">Золото</div>
<div class="cell" style="left:1223px;top:253px;height:19px;font-size:10.5px;color:#444;">500</div>
<div style="position:absolute;left:96px;top:271px;width:1182px;height:19px;background:#e2e2e2"></div>
<div style="position:absolute;left:550px;top:272px;width:53px;height:18px;background:#b4e4ae"></div>
<div style="position:absolute;left:604px;top:272px;width:60px;height:18px;background:#b4e4ae"></div>
<div style="position:absolute;left:666px;top:272px;width:15px;height:18px;background:#fee683"></div>
<div style="position:absolute;left:682px;top:272px;width:42px;height:18px;background:#fee683"></div>
<div style="position:absolute;left:759px;top:272px;width:14px;height:18px;background:#63b97b"></div>
<div style="position:absolute;left:774px;top:272px;width:63px;height:18px;background:#63b97b"></div>
<div style="position:absolute;left:871px;top:272px;width:14px;height:18px;background:#fee683"></div>
<div style="position:absolute;left:886px;top:272px;width:63px;height:18px;background:#fee683"></div>
<div style="position:absolute;left:984px;top:272px;width:64px;height:18px;background:#ffff33"></div>
<div style="position:absolute;left:1049px;top:272px;width:65px;height:18px;background:#ffff33"></div>
<div style="position:absolute;left:96px;top:271px;width:1px;height:19px;background:#e7e3dc"></div>
<div style="position:absolute;left:122px;top:271px;width:1px;height:19px;background:#e7e3dc"></div>
<div style="position:absolute;left:171px;top:271px;width:1px;height:19px;background:#e7e3dc"></div>
<div style="position:absolute;left:359px;top:271px;width:1px;height:19px;background:#e7e3dc"></div>
<div style="position:absolute;left:424px;top:271px;width:1px;height:19px;background:#e7e3dc"></div>
<div style="position:absolute;left:466px;top:271px;width:1px;height:19px;background:#e7e3dc"></div>
<div style="position:absolute;left:499px;top:271px;width:1px;height:19px;background:#e7e3dc"></div>
<div style="position:absolute;left:549px;top:271px;width:1px;height:19px;background:#e7e3dc"></div>
<div style="position:absolute;left:603px;top:271px;width:1px;height:19px;background:#e7e3dc"></div>
<div style="position:absolute;left:664px;top:271px;width:1px;height:19px;background:#e7e3dc"></div>
<div style="position:absolute;left:681px;top:271px;width:1px;height:19px;background:#e7e3dc"></div>
<div style="position:absolute;left:724px;top:271px;width:1px;height:19px;background:#e7e3dc"></div>
<div style="position:absolute;left:758px;top:271px;width:1px;height:19px;background:#e7e3dc"></div>
<div style="position:absolute;left:773px;top:271px;width:1px;height:19px;background:#e7e3dc"></div>
<div style="position:absolute;left:837px;top:271px;width:1px;height:19px;background:#e7e3dc"></div>
<div style="position:absolute;left:870px;top:271px;width:1px;height:19px;background:#e7e3dc"></div>
<div style="position:absolute;left:885px;top:271px;width:1px;height:19px;background:#e7e3dc"></div>
<div style="position:absolute;left:949px;top:271px;width:1px;height:19px;background:#e7e3dc"></div>
<div style="position:absolute;left:1048px;top:271px;width:1px;height:19px;background:#e7e3dc"></div>
<div style="position:absolute;left:1114px;top:271px;width:1px;height:19px;background:#e7e3dc"></div>
<div style="position:absolute;left:1216px;top:271px;width:1px;height:19px;background:#e7e3dc"></div>
<div style="position:absolute;left:1277px;top:271px;width:1px;height:19px;background:#e7e3dc"></div>
<div style="position:absolute;left:96px;top:271px;width:1182px;height:1px;background:#e7e3dc"></div>
<div style="position:absolute;left:665px;top:271px;width:1px;height:19px;background:#555"></div>
<div style="position:absolute;left:983px;top:271px;width:1px;height:19px;background:#555"></div>
<div style="position:absolute;left:103.5px;top:276px;width:8.5px;height:9px;border:1px solid #5a5a5a;border-radius:2px"></div>
<div class="cell" style="left:130px;top:272px;height:19px;font-size:10.5px;color:#444;">6</div>
<div style="left:155px;top:276px;width:9px;height:9px;border:1px solid #555;border-radius:1.5px"><div style="left:1px;top:3px;width:5px;height:1px;background:#555"></div><div style="left:3px;top:1px;width:1px;height:5px;background:#555"></div></div>
<div class="cell" style="left:178px;top:271px;height:19px;font-size:10.2px;color:#33589c;transform:scaleX(0.93);transform-origin:0 0">Салат Тай</div>
<svg style="position:absolute;left:329px;top:275px" width="11" height="11" viewBox="0 0 11 11"><circle cx="5.5" cy="5.5" r="5" fill="#9c9c9c"/><rect x="4.6" y="2.1" width="1.9" height="1.6" fill="#fff"/><path d="M3.9 4.5 H6.5 V7.9 H7.1 V9 H3.9 V7.9 H4.6 V5.5 H3.9 Z" fill="#fff"/></svg>
<svg style="position:absolute;left:344px;top:273.5px" width="12" height="12" viewBox="0 0 12 12"><path d="M0.6 4.5 H3.2 V2.8 A1.2 1.2 0 0 1 5.6 2.8 V4.5 H7.9 V7.5 H10.5 A1 1 0 0 1 10.5 9.5 H7.9 V11.3 H5.8 V9.8 A1.5 1.5 0 0 0 2.8 9.8 V11.3 H0.6 Z" fill="#9c9c9c"/></svg>
<div class="cell" style="left:366px;top:272px;height:19px;font-size:10px;color:#444;">490</div>
<div class="cell" style="left:431px;top:272px;height:19px;font-size:10px;color:#444;">225</div>
<div class="cell" style="left:474px;top:272px;height:19px;font-size:11px;color:#444;">C</div>
<div class="cell" style="left:506px;top:272px;height:19px;font-size:10px;color:#444;">252</div>
<div class="cell" style="left:557px;top:272px;height:19px;font-size:10px;color:#333;">-3%</div>
<div class="cell" style="left:611px;top:272px;height:19px;font-size:10px;color:#333;">+4%</div>
<div class="cell" style="left:671px;top:272px;height:19px;font-size:8.5px;color:#444;">B</div>
<div class="cell" style="left:689px;top:272px;height:19px;font-size:11px;color:#444;">299</div>
<div class="cell" style="left:730px;top:272px;height:19px;font-size:8.5px;color:#444;">5,6%</div>
<div class="cell" style="left:763px;top:272px;height:19px;font-size:8.5px;color:#444;">A</div>
<div class="cell" style="left:781px;top:272px;height:19px;font-size:11px;color:#444;">142 540</div>
<div class="cell" style="left:843px;top:272px;height:19px;font-size:8.5px;color:#444;">6,6%</div>
<div class="cell" style="left:875px;top:272px;height:19px;font-size:8.5px;color:#444;">B</div>
<div class="cell" style="left:893px;top:272px;height:19px;font-size:11px;color:#444;">75 330</div>
<div class="cell" style="left:955px;top:272px;height:19px;font-size:8.5px;color:#444;">5,6%</div>
<div class="cell" style="left:990px;top:271px;height:19px;font-size:10.2px;color:#444;transform:scaleX(0.92);transform-origin:0 0">Лошадки</div>
<div class="cell" style="left:1056px;top:271px;height:19px;font-size:10.2px;color:#444;transform:scaleX(0.92);transform-origin:0 0">Standards</div>
<div class="cell" style="left:1121px;top:271px;height:19px;font-size:10.2px;color:#444;transform:scaleX(0.92);transform-origin:0 0">Восходящие звезды</div>
<div class="cell" style="left:1223px;top:272px;height:19px;font-size:10.5px;color:#444;">477</div>
<div style="position:absolute;left:96px;top:290px;width:1182px;height:19px;background:#fff"></div>
<div style="position:absolute;left:550px;top:291px;width:53px;height:18px;background:#f5a59b"></div>
<div style="position:absolute;left:604px;top:291px;width:60px;height:18px;background:#b4e4ae"></div>
<div style="position:absolute;left:666px;top:291px;width:15px;height:18px;background:#fee683"></div>
<div style="position:absolute;left:682px;top:291px;width:42px;height:18px;background:#fee683"></div>
<div style="position:absolute;left:759px;top:291px;width:14px;height:18px;background:#fee683"></div>
<div style="position:absolute;left:774px;top:291px;width:63px;height:18px;background:#fee683"></div>
<div style="position:absolute;left:871px;top:291px;width:14px;height:18px;background:#63b97b"></div>
<div style="position:absolute;left:886px;top:291px;width:63px;height:18px;background:#63b97b"></div>
<div style="position:absolute;left:984px;top:291px;width:64px;height:18px;background:#afc683"></div>
<div style="position:absolute;left:1049px;top:291px;width:65px;height:18px;background:#afc683"></div>
<div style="position:absolute;left:96px;top:290px;width:1px;height:19px;background:#e7e3dc"></div>
<div style="position:absolute;left:122px;top:290px;width:1px;height:19px;background:#e7e3dc"></div>
<div style="position:absolute;left:171px;top:290px;width:1px;height:19px;background:#e7e3dc"></div>
<div style="position:absolute;left:359px;top:290px;width:1px;height:19px;background:#e7e3dc"></div>
<div style="position:absolute;left:424px;top:290px;width:1px;height:19px;background:#e7e3dc"></div>
<div style="position:absolute;left:466px;top:290px;width:1px;height:19px;background:#e7e3dc"></div>
<div style="position:absolute;left:499px;top:290px;width:1px;height:19px;background:#e7e3dc"></div>
<div style="position:absolute;left:549px;top:290px;width:1px;height:19px;background:#e7e3dc"></div>
<div style="position:absolute;left:603px;top:290px;width:1px;height:19px;background:#e7e3dc"></div>
<div style="position:absolute;left:664px;top:290px;width:1px;height:19px;background:#e7e3dc"></div>
<div style="position:absolute;left:681px;top:290px;width:1px;height:19px;background:#e7e3dc"></div>
<div style="position:absolute;left:724px;top:290px;width:1px;height:19px;background:#e7e3dc"></div>
<div style="position:absolute;left:758px;top:290px;width:1px;height:19px;background:#e7e3dc"></div>
<div style="position:absolute;left:773px;top:290px;width:1px;height:19px;background:#e7e3dc"></div>
<div style="position:absolute;left:837px;top:290px;width:1px;height:19px;background:#e7e3dc"></div>
<div style="position:absolute;left:870px;top:290px;width:1px;height:19px;background:#e7e3dc"></div>
<div style="position:absolute;left:885px;top:290px;width:1px;height:19px;background:#e7e3dc"></div>
<div style="position:absolute;left:949px;top:290px;width:1px;height:19px;background:#e7e3dc"></div>
<div style="position:absolute;left:1048px;top:290px;width:1px;height:19px;background:#e7e3dc"></div>
<div style="position:absolute;left:1114px;top:290px;width:1px;height:19px;background:#e7e3dc"></div>
<div style="position:absolute;left:1216px;top:290px;width:1px;height:19px;background:#e7e3dc"></div>
<div style="position:absolute;left:1277px;top:290px;width:1px;height:19px;background:#e7e3dc"></div>
<div style="position:absolute;left:96px;top:290px;width:1182px;height:1px;background:#e7e3dc"></div>
<div style="position:absolute;left:665px;top:290px;width:1px;height:19px;background:#555"></div>
<div style="position:absolute;left:983px;top:290px;width:1px;height:19px;background:#555"></div>
<div style="position:absolute;left:103.5px;top:295px;width:8.5px;height:9px;border:1px solid #5a5a5a;border-radius:2px"></div>
<div class="cell" style="left:130px;top:291px;height:19px;font-size:10.5px;color:#444;">7</div>
<div style="left:155px;top:295px;width:9px;height:9px;border:1px solid #555;border-radius:1.5px"><div style="left:1px;top:3px;width:5px;height:1px;background:#555"></div><div style="left:3px;top:1px;width:1px;height:5px;background:#555"></div></div>
<div class="cell" style="left:178px;top:290px;height:19px;font-size:10.2px;color:#33589c;transform:scaleX(0.93);transform-origin:0 0">Ататакай</div>
<svg style="position:absolute;left:329px;top:294px" width="11" height="11" viewBox="0 0 11 11"><circle cx="5.5" cy="5.5" r="5" fill="#9c9c9c"/><rect x="4.6" y="2.1" width="1.9" height="1.6" fill="#fff"/><path d="M3.9 4.5 H6.5 V7.9 H7.1 V9 H3.9 V7.9 H4.6 V5.5 H3.9 Z" fill="#fff"/></svg>
<svg style="position:absolute;left:344px;top:292.5px" width="12" height="12" viewBox="0 0 12 12"><path d="M0.6 4.5 H3.2 V2.8 A1.2 1.2 0 0 1 5.6 2.8 V4.5 H7.9 V7.5 H10.5 A1 1 0 0 1 10.5 9.5 H7.9 V11.3 H5.8 V9.8 A1.5 1.5 0 0 0 2.8 9.8 V11.3 H0.6 Z" fill="#9c9c9c"/></svg>
<div class="cell" style="left:366px;top:291px;height:19px;font-size:10px;color:#444;">520</div>
<div class="cell" style="left:431px;top:291px;height:19px;font-size:10px;color:#444;">145</div>
<div class="cell" style="left:474px;top:291px;height:19px;font-size:11px;color:#444;">B</div>
<div class="cell" style="left:506px;top:291px;height:19px;font-size:10px;color:#444;">334</div>
<div class="cell" style="left:557px;top:291px;height:19px;font-size:10px;color:#333;">+2%</div>
<div class="cell" style="left:611px;top:291px;height:19px;font-size:10px;color:#333;">+47%</div>
<div class="cell" style="left:671px;top:291px;height:19px;font-size:8.5px;color:#444;">B</div>
<div class="cell" style="left:689px;top:291px;height:19px;font-size:11px;color:#444;">242</div>
<div class="cell" style="left:730px;top:291px;height:19px;font-size:8.5px;color:#444;">4,6%</div>
<div class="cell" style="left:763px;top:291px;height:19px;font-size:8.5px;color:#444;">B</div>
<div class="cell" style="left:781px;top:291px;height:19px;font-size:11px;color:#444;">115 939</div>
<div class="cell" style="left:843px;top:291px;height:19px;font-size:8.5px;color:#444;">5,4%</div>
<div class="cell" style="left:875px;top:291px;height:19px;font-size:8.5px;color:#444;">A</div>
<div class="cell" style="left:893px;top:291px;height:19px;font-size:11px;color:#444;">80 762</div>
<div class="cell" style="left:955px;top:291px;height:19px;font-size:8.5px;color:#444;">6%</div>
<div class="cell" style="left:990px;top:290px;height:19px;font-size:10.2px;color:#444;transform:scaleX(0.92);transform-origin:0 0">Звезды</div>
<div class="cell" style="left:1056px;top:290px;height:19px;font-size:10.2px;color:#444;transform:scaleX(0.92);transform-origin:0 0">Prime</div>
<div class="cell" style="left:1121px;top:290px;height:19px;font-size:10.2px;color:#444;transform:scaleX(0.92);transform-origin:0 0">Золото</div>
<div class="cell" style="left:1223px;top:291px;height:19px;font-size:10.5px;color:#444;">479</div>
<div style="position:absolute;left:96px;top:309px;width:1182px;height:19px;background:#e2e2e2"></div>
<div style="position:absolute;left:550px;top:310px;width:53px;height:18px;background:#b4e4ae"></div>
<div style="position:absolute;left:604px;top:310px;width:60px;height:18px;background:#b4e4ae"></div>
<div style="position:absolute;left:666px;top:310px;width:15px;height:18px;background:#fee683"></div>
<div style="position:absolute;left:682px;top:310px;width:42px;height:18px;background:#fee683"></div>
<div style="position:absolute;left:759px;top:310px;width:14px;height:18px;background:#fee683"></div>
<div style="position:absolute;left:774px;top:310px;width:63px;height:18px;background:#fee683"></div>
<div style="position:absolute;left:871px;top:310px;width:14px;height:18px;background:#fee683"></div>
<div style="position:absolute;left:886px;top:310px;width:63px;height:18px;background:#fee683"></div>
<div style="position:absolute;left:984px;top:310px;width:64px;height:18px;background:#afc683"></div>
<div style="position:absolute;left:1049px;top:310px;width:65px;height:18px;background:#afc683"></div>
<div style="position:absolute;left:96px;top:309px;width:1px;height:19px;background:#e7e3dc"></div>
<div style="position:absolute;left:122px;top:309px;width:1px;height:19px;background:#e7e3dc"></div>
<div style="position:absolute;left:171px;top:309px;width:1px;height:19px;background:#e7e3dc"></div>
<div style="position:absolute;left:359px;top:309px;width:1px;height:19px;background:#e7e3dc"></div>
<div style="position:absolute;left:424px;top:309px;width:1px;height:19px;background:#e7e3dc"></div>
<div style="position:absolute;left:466px;top:309px;width:1px;height:19px;background:#e7e3dc"></div>
<div style="position:absolute;left:499px;top:309px;width:1px;height:19px;background:#e7e3dc"></div>
<div style="position:absolute;left:549px;top:309px;width:1px;height:19px;background:#e7e3dc"></div>
<div style="position:absolute;left:603px;top:309px;width:1px;height:19px;background:#e7e3dc"></div>
<div style="position:absolute;left:664px;top:309px;width:1px;height:19px;background:#e7e3dc"></div>
<div style="position:absolute;left:681px;top:309px;width:1px;height:19px;background:#e7e3dc"></div>
<div style="position:absolute;left:724px;top:309px;width:1px;height:19px;background:#e7e3dc"></div>
<div style="position:absolute;left:758px;top:309px;width:1px;height:19px;background:#e7e3dc"></div>
<div style="position:absolute;left:773px;top:309px;width:1px;height:19px;background:#e7e3dc"></div>
<div style="position:absolute;left:837px;top:309px;width:1px;height:19px;background:#e7e3dc"></div>
<div style="position:absolute;left:870px;top:309px;width:1px;height:19px;background:#e7e3dc"></div>
<div style="position:absolute;left:885px;top:309px;width:1px;height:19px;background:#e7e3dc"></div>
<div style="position:absolute;left:949px;top:309px;width:1px;height:19px;background:#e7e3dc"></div>
<div style="position:absolute;left:1048px;top:309px;width:1px;height:19px;background:#e7e3dc"></div>
<div style="position:absolute;left:1114px;top:309px;width:1px;height:19px;background:#e7e3dc"></div>
<div style="position:absolute;left:1216px;top:309px;width:1px;height:19px;background:#e7e3dc"></div>
<div style="position:absolute;left:1277px;top:309px;width:1px;height:19px;background:#e7e3dc"></div>
<div style="position:absolute;left:96px;top:309px;width:1182px;height:1px;background:#e7e3dc"></div>
<div style="position:absolute;left:665px;top:309px;width:1px;height:19px;background:#555"></div>
<div style="position:absolute;left:983px;top:309px;width:1px;height:19px;background:#555"></div>
<div style="position:absolute;left:103.5px;top:314px;width:8.5px;height:9px;border:1px solid #5a5a5a;border-radius:2px"></div>
<div class="cell" style="left:130px;top:310px;height:19px;font-size:10.5px;color:#444;">8</div>
<div style="left:155px;top:314px;width:9px;height:9px;border:1px solid #555;border-radius:1.5px"><div style="left:1px;top:3px;width:5px;height:1px;background:#555"></div><div style="left:3px;top:1px;width:1px;height:5px;background:#555"></div></div>
<div class="cell" style="left:178px;top:309px;height:19px;font-size:10.2px;color:#33589c;transform:scaleX(0.93);transform-origin:0 0">Тот самый Харбин</div>
<svg style="position:absolute;left:329px;top:313px" width="11" height="11" viewBox="0 0 11 11"><circle cx="5.5" cy="5.5" r="5" fill="#9c9c9c"/><rect x="4.6" y="2.1" width="1.9" height="1.6" fill="#fff"/><path d="M3.9 4.5 H6.5 V7.9 H7.1 V9 H3.9 V7.9 H4.6 V5.5 H3.9 Z" fill="#fff"/></svg>
<svg style="position:absolute;left:344px;top:311.5px" width="12" height="12" viewBox="0 0 12 12"><path d="M0.6 4.5 H3.2 V2.8 A1.2 1.2 0 0 1 5.6 2.8 V4.5 H7.9 V7.5 H10.5 A1 1 0 0 1 10.5 9.5 H7.9 V11.3 H5.8 V9.8 A1.5 1.5 0 0 0 2.8 9.8 V11.3 H0.6 Z" fill="#9c9c9c"/></svg>
<div class="cell" style="left:366px;top:310px;height:19px;font-size:10px;color:#444;">390</div>
<div class="cell" style="left:431px;top:310px;height:19px;font-size:10px;color:#444;">83</div>
<div class="cell" style="left:474px;top:310px;height:19px;font-size:11px;color:#444;">C</div>
<div class="cell" style="left:506px;top:310px;height:19px;font-size:10px;color:#444;">288</div>
<div class="cell" style="left:557px;top:310px;height:19px;font-size:10px;color:#333;">-23%</div>
<div class="cell" style="left:611px;top:310px;height:19px;font-size:10px;color:#333;">+20%</div>
<div class="cell" style="left:671px;top:310px;height:19px;font-size:8.5px;color:#444;">B</div>
<div class="cell" style="left:689px;top:310px;height:19px;font-size:11px;color:#444;">241</div>
<div class="cell" style="left:730px;top:310px;height:19px;font-size:8.5px;color:#444;">4,5%</div>
<div class="cell" style="left:763px;top:310px;height:19px;font-size:8.5px;color:#444;">B</div>
<div class="cell" style="left:781px;top:310px;height:19px;font-size:11px;color:#444;">89 500</div>
<div class="cell" style="left:843px;top:310px;height:19px;font-size:8.5px;color:#444;">4,1%</div>
<div class="cell" style="left:875px;top:310px;height:19px;font-size:8.5px;color:#444;">B</div>
<div class="cell" style="left:893px;top:310px;height:19px;font-size:11px;color:#444;">69 398</div>
<div class="cell" style="left:955px;top:310px;height:19px;font-size:8.5px;color:#444;">5,1%</div>
<div class="cell" style="left:990px;top:309px;height:19px;font-size:10.2px;color:#444;transform:scaleX(0.92);transform-origin:0 0">Звезды</div>
<div class="cell" style="left:1056px;top:309px;height:19px;font-size:10.2px;color:#444;transform:scaleX(0.92);transform-origin:0 0">Prime</div>
<div class="cell" style="left:1121px;top:309px;height:19px;font-size:10.2px;color:#444;transform:scaleX(0.92);transform-origin:0 0">Золото</div>
<div class="cell" style="left:1223px;top:310px;height:19px;font-size:10.5px;color:#444;">371</div>
<div style="position:absolute;left:96px;top:328px;width:1182px;height:19px;background:#fff"></div>
<div style="position:absolute;left:550px;top:329px;width:53px;height:18px;background:#b4e4ae"></div>
<div style="position:absolute;left:604px;top:329px;width:60px;height:18px;background:#b4e4ae"></div>
<div style="position:absolute;left:666px;top:329px;width:15px;height:18px;background:#fee683"></div>
<div style="position:absolute;left:682px;top:329px;width:42px;height:18px;background:#fee683"></div>
<div style="position:absolute;left:759px;top:329px;width:14px;height:18px;background:#fee683"></div>
<div style="position:absolute;left:774px;top:329px;width:63px;height:18px;background:#fee683"></div>
<div style="position:absolute;left:871px;top:329px;width:14px;height:18px;background:#fee683"></div>
<div style="position:absolute;left:886px;top:329px;width:63px;height:18px;background:#fee683"></div>
<div style="position:absolute;left:984px;top:329px;width:64px;height:18px;background:#afc683"></div>
<div style="position:absolute;left:1049px;top:329px;width:65px;height:18px;background:#f0ae7a"></div>
<div style="position:absolute;left:96px;top:328px;width:1px;height:19px;background:#e7e3dc"></div>
<div style="position:absolute;left:122px;top:328px;width:1px;height:19px;background:#e7e3dc"></div>
<div style="position:absolute;left:171px;top:328px;width:1px;height:19px;background:#e7e3dc"></div>
<div style="position:absolute;left:359px;top:328px;width:1px;height:19px;background:#e7e3dc"></div>
<div style="position:absolute;left:424px;top:328px;width:1px;height:19px;background:#e7e3dc"></div>
<div style="position:absolute;left:466px;top:328px;width:1px;height:19px;background:#e7e3dc"></div>
<div style="position:absolute;left:499px;top:328px;width:1px;height:19px;background:#e7e3dc"></div>
<div style="position:absolute;left:549px;top:328px;width:1px;height:19px;background:#e7e3dc"></div>
<div style="position:absolute;left:603px;top:328px;width:1px;height:19px;background:#e7e3dc"></div>
<div style="position:absolute;left:664px;top:328px;width:1px;height:19px;background:#e7e3dc"></div>
<div style="position:absolute;left:681px;top:328px;width:1px;height:19px;background:#e7e3dc"></div>
<div style="position:absolute;left:724px;top:328px;width:1px;height:19px;background:#e7e3dc"></div>
<div style="position:absolute;left:758px;top:328px;width:1px;height:19px;background:#e7e3dc"></div>
<div style="position:absolute;left:773px;top:328px;width:1px;height:19px;background:#e7e3dc"></div>
<div style="position:absolute;left:837px;top:328px;width:1px;height:19px;background:#e7e3dc"></div>
<div style="position:absolute;left:870px;top:328px;width:1px;height:19px;background:#e7e3dc"></div>
<div style="position:absolute;left:885px;top:328px;width:1px;height:19px;background:#e7e3dc"></div>
<div style="position:absolute;left:949px;top:328px;width:1px;height:19px;background:#e7e3dc"></div>
<div style="position:absolute;left:1048px;top:328px;width:1px;height:19px;background:#e7e3dc"></div>
<div style="position:absolute;left:1114px;top:328px;width:1px;height:19px;background:#e7e3dc"></div>
<div style="position:absolute;left:1216px;top:328px;width:1px;height:19px;background:#e7e3dc"></div>
<div style="position:absolute;left:1277px;top:328px;width:1px;height:19px;background:#e7e3dc"></div>
<div style="position:absolute;left:96px;top:328px;width:1182px;height:1px;background:#e7e3dc"></div>
<div style="position:absolute;left:665px;top:328px;width:1px;height:19px;background:#555"></div>
<div style="position:absolute;left:983px;top:328px;width:1px;height:19px;background:#555"></div>
<div style="position:absolute;left:103.5px;top:333px;width:8.5px;height:9px;border:1px solid #5a5a5a;border-radius:2px"></div>
<div class="cell" style="left:130px;top:329px;height:19px;font-size:10.5px;color:#444;">9</div>
<div style="left:155px;top:333px;width:9px;height:9px;border:1px solid #555;border-radius:1.5px"><div style="left:1px;top:3px;width:5px;height:1px;background:#555"></div><div style="left:3px;top:1px;width:1px;height:5px;background:#555"></div></div>
<div class="cell" style="left:178px;top:328px;height:19px;font-size:10.2px;color:#33589c;transform:scaleX(0.93);transform-origin:0 0">500 дней лета</div>
<svg style="position:absolute;left:329px;top:332px" width="11" height="11" viewBox="0 0 11 11"><circle cx="5.5" cy="5.5" r="5" fill="#9c9c9c"/><rect x="4.6" y="2.1" width="1.9" height="1.6" fill="#fff"/><path d="M3.9 4.5 H6.5 V7.9 H7.1 V9 H3.9 V7.9 H4.6 V5.5 H3.9 Z" fill="#fff"/></svg>
<svg style="position:absolute;left:344px;top:330.5px" width="12" height="12" viewBox="0 0 12 12"><path d="M0.6 4.5 H3.2 V2.8 A1.2 1.2 0 0 1 5.6 2.8 V4.5 H7.9 V7.5 H10.5 A1 1 0 0 1 10.5 9.5 H7.9 V11.3 H5.8 V9.8 A1.5 1.5 0 0 0 2.8 9.8 V11.3 H0.6 Z" fill="#9c9c9c"/></svg>
<div class="cell" style="left:366px;top:329px;height:19px;font-size:10px;color:#444;">390</div>
<div class="cell" style="left:431px;top:329px;height:19px;font-size:10px;color:#444;">115</div>
<div class="cell" style="left:474px;top:329px;height:19px;font-size:11px;color:#444;">C</div>
<div class="cell" style="left:506px;top:329px;height:19px;font-size:10px;color:#444;">256</div>
<div class="cell" style="left:557px;top:329px;height:19px;font-size:10px;color:#333;">-23%</div>
<div class="cell" style="left:611px;top:329px;height:19px;font-size:10px;color:#333;">+8%</div>
<div class="cell" style="left:671px;top:329px;height:19px;font-size:8.5px;color:#444;">B</div>
<div class="cell" style="left:689px;top:329px;height:19px;font-size:11px;color:#444;">240</div>
<div class="cell" style="left:730px;top:329px;height:19px;font-size:8.5px;color:#444;">4,5%</div>
<div class="cell" style="left:763px;top:329px;height:19px;font-size:8.5px;color:#444;">B</div>
<div class="cell" style="left:781px;top:329px;height:19px;font-size:11px;color:#444;">88 913</div>
<div class="cell" style="left:843px;top:329px;height:19px;font-size:8.5px;color:#444;">4,1%</div>
<div class="cell" style="left:875px;top:329px;height:19px;font-size:8.5px;color:#444;">B</div>
<div class="cell" style="left:893px;top:329px;height:19px;font-size:11px;color:#444;">61 381</div>
<div class="cell" style="left:955px;top:329px;height:19px;font-size:8.5px;color:#444;">4,5%</div>
<div class="cell" style="left:990px;top:328px;height:19px;font-size:10.2px;color:#444;transform:scaleX(0.92);transform-origin:0 0">Звезды</div>
<div class="cell" style="left:1056px;top:328px;height:19px;font-size:10.2px;color:#444;transform:scaleX(0.92);transform-origin:0 0">Sleepers</div>
<div class="cell" style="left:1121px;top:328px;height:19px;font-size:10.2px;color:#444;transform:scaleX(0.92);transform-origin:0 0">Сиреневый туман</div>
<div class="cell" style="left:1223px;top:329px;height:19px;font-size:10.5px;color:#444;">370</div>
<div style="position:absolute;left:96px;top:347px;width:1182px;height:19px;background:#e2e2e2"></div>
<div style="position:absolute;left:550px;top:348px;width:53px;height:18px;background:#f5a59b"></div>
<div style="position:absolute;left:604px;top:348px;width:60px;height:18px;background:#b4e4ae"></div>
<div style="position:absolute;left:666px;top:348px;width:15px;height:18px;background:#fee683"></div>
<div style="position:absolute;left:682px;top:348px;width:42px;height:18px;background:#fee683"></div>
<div style="position:absolute;left:759px;top:348px;width:14px;height:18px;background:#fee683"></div>
<div style="position:absolute;left:774px;top:348px;width:63px;height:18px;background:#fee683"></div>
<div style="position:absolute;left:871px;top:348px;width:14px;height:18px;background:#fee683"></div>
<div style="position:absolute;left:886px;top:348px;width:63px;height:18px;background:#fee683"></div>
<div style="position:absolute;left:984px;top:348px;width:64px;height:18px;background:#afc683"></div>
<div style="position:absolute;left:1049px;top:348px;width:65px;height:18px;background:#afc683"></div>
<div style="position:absolute;left:96px;top:347px;width:1px;height:19px;background:#e7e3dc"></div>
<div style="position:absolute;left:122px;top:347px;width:1px;height:19px;background:#e7e3dc"></div>
<div style="position:absolute;left:171px;top:347px;width:1px;height:19px;background:#e7e3dc"></div>
<div style="position:absolute;left:359px;top:347px;width:1px;height:19px;background:#e7e3dc"></div>
<div style="position:absolute;left:424px;top:347px;width:1px;height:19px;background:#e7e3dc"></div>
<div style="position:absolute;left:466px;top:347px;width:1px;height:19px;background:#e7e3dc"></div>
<div style="position:absolute;left:499px;top:347px;width:1px;height:19px;background:#e7e3dc"></div>
<div style="position:absolute;left:549px;top:347px;width:1px;height:19px;background:#e7e3dc"></div>
<div style="position:absolute;left:603px;top:347px;width:1px;height:19px;background:#e7e3dc"></div>
<div style="position:absolute;left:664px;top:347px;width:1px;height:19px;background:#e7e3dc"></div>
<div style="position:absolute;left:681px;top:347px;width:1px;height:19px;background:#e7e3dc"></div>
<div style="position:absolute;left:724px;top:347px;width:1px;height:19px;background:#e7e3dc"></div>
<div style="position:absolute;left:758px;top:347px;width:1px;height:19px;background:#e7e3dc"></div>
<div style="position:absolute;left:773px;top:347px;width:1px;height:19px;background:#e7e3dc"></div>
<div style="position:absolute;left:837px;top:347px;width:1px;height:19px;background:#e7e3dc"></div>
<div style="position:absolute;left:870px;top:347px;width:1px;height:19px;background:#e7e3dc"></div>
<div style="position:absolute;left:885px;top:347px;width:1px;height:19px;background:#e7e3dc"></div>
<div style="position:absolute;left:949px;top:347px;width:1px;height:19px;background:#e7e3dc"></div>
<div style="position:absolute;left:1048px;top:347px;width:1px;height:19px;background:#e7e3dc"></div>
<div style="position:absolute;left:1114px;top:347px;width:1px;height:19px;background:#e7e3dc"></div>
<div style="position:absolute;left:1216px;top:347px;width:1px;height:19px;background:#e7e3dc"></div>
<div style="position:absolute;left:1277px;top:347px;width:1px;height:19px;background:#e7e3dc"></div>
<div style="position:absolute;left:96px;top:347px;width:1182px;height:1px;background:#e7e3dc"></div>
<div style="position:absolute;left:665px;top:347px;width:1px;height:19px;background:#555"></div>
<div style="position:absolute;left:983px;top:347px;width:1px;height:19px;background:#555"></div>
<div style="position:absolute;left:103.5px;top:352px;width:8.5px;height:9px;border:1px solid #5a5a5a;border-radius:2px"></div>
<div class="cell" style="left:130px;top:348px;height:19px;font-size:10.5px;color:#444;">10</div>
<div class="cell" style="left:178px;top:347px;height:19px;font-size:10.2px;color:#33589c;transform:scaleX(0.93);transform-origin:0 0">Салат Халонг</div>
<svg style="position:absolute;left:329px;top:351px" width="11" height="11" viewBox="0 0 11 11"><circle cx="5.5" cy="5.5" r="5" fill="#9c9c9c"/><rect x="4.6" y="2.1" width="1.9" height="1.6" fill="#fff"/><path d="M3.9 4.5 H6.5 V7.9 H7.1 V9 H3.9 V7.9 H4.6 V5.5 H3.9 Z" fill="#fff"/></svg>
<svg style="position:absolute;left:344px;top:349.5px" width="12" height="12" viewBox="0 0 12 12"><path d="M0.6 4.5 H3.2 V2.8 A1.2 1.2 0 0 1 5.6 2.8 V4.5 H7.9 V7.5 H10.5 A1 1 0 0 1 10.5 9.5 H7.9 V11.3 H5.8 V9.8 A1.5 1.5 0 0 0 2.8 9.8 V11.3 H0.6 Z" fill="#9c9c9c"/></svg>
<div class="cell" style="left:366px;top:348px;height:19px;font-size:10px;color:#444;">530</div>
<div class="cell" style="left:431px;top:348px;height:19px;font-size:10px;color:#444;">167</div>
<div class="cell" style="left:474px;top:348px;height:19px;font-size:11px;color:#444;">B</div>
<div class="cell" style="left:506px;top:348px;height:19px;font-size:10px;color:#444;">325</div>
<div class="cell" style="left:557px;top:348px;height:19px;font-size:10px;color:#333;">+4%</div>
<div class="cell" style="left:611px;top:348px;height:19px;font-size:10px;color:#333;">+42%</div>
<div class="cell" style="left:671px;top:348px;height:19px;font-size:8.5px;color:#444;">B</div>
<div class="cell" style="left:689px;top:348px;height:19px;font-size:11px;color:#444;">236</div>
<div class="cell" style="left:730px;top:348px;height:19px;font-size:8.5px;color:#444;">4,5%</div>
<div class="cell" style="left:763px;top:348px;height:19px;font-size:8.5px;color:#444;">B</div>
<div class="cell" style="left:781px;top:348px;height:19px;font-size:11px;color:#444;">116 319</div>
<div class="cell" style="left:843px;top:348px;height:19px;font-size:8.5px;color:#444;">5,4%</div>
<div class="cell" style="left:875px;top:348px;height:19px;font-size:8.5px;color:#444;">B</div>
<div class="cell" style="left:893px;top:348px;height:19px;font-size:11px;color:#444;">76 810</div>
<div class="cell" style="left:955px;top:348px;height:19px;font-size:8.5px;color:#444;">5,7%</div>
<div class="cell" style="left:990px;top:347px;height:19px;font-size:10.2px;color:#444;transform:scaleX(0.92);transform-origin:0 0">Звезды</div>
<div class="cell" style="left:1056px;top:347px;height:19px;font-size:10.2px;color:#444;transform:scaleX(0.92);transform-origin:0 0">Prime</div>
<div class="cell" style="left:1121px;top:347px;height:19px;font-size:10.2px;color:#444;transform:scaleX(0.92);transform-origin:0 0">Золото</div>
<div class="cell" style="left:1223px;top:348px;height:19px;font-size:10.5px;color:#444;">493</div>
<div style="position:absolute;left:96px;top:366px;width:1182px;height:19px;background:#fff"></div>
<div style="position:absolute;left:550px;top:367px;width:53px;height:18px;background:#f5a59b"></div>
<div style="position:absolute;left:604px;top:367px;width:60px;height:18px;background:#b4e4ae"></div>
<div style="position:absolute;left:666px;top:367px;width:15px;height:18px;background:#fee683"></div>
<div style="position:absolute;left:682px;top:367px;width:42px;height:18px;background:#fee683"></div>
<div style="position:absolute;left:759px;top:367px;width:14px;height:18px;background:#fee683"></div>
<div style="position:absolute;left:774px;top:367px;width:63px;height:18px;background:#fee683"></div>
<div style="position:absolute;left:871px;top:367px;width:14px;height:18px;background:#fee683"></div>
<div style="position:absolute;left:886px;top:367px;width:63px;height:18px;background:#fee683"></div>
<div style="position:absolute;left:984px;top:367px;width:64px;height:18px;background:#afc683"></div>
<div style="position:absolute;left:1049px;top:367px;width:65px;height:18px;background:#afc683"></div>
<div style="position:absolute;left:96px;top:366px;width:1px;height:19px;background:#e7e3dc"></div>
<div style="position:absolute;left:122px;top:366px;width:1px;height:19px;background:#e7e3dc"></div>
<div style="position:absolute;left:171px;top:366px;width:1px;height:19px;background:#e7e3dc"></div>
<div style="position:absolute;left:359px;top:366px;width:1px;height:19px;background:#e7e3dc"></div>
<div style="position:absolute;left:424px;top:366px;width:1px;height:19px;background:#e7e3dc"></div>
<div style="position:absolute;left:466px;top:366px;width:1px;height:19px;background:#e7e3dc"></div>
<div style="position:absolute;left:499px;top:366px;width:1px;height:19px;background:#e7e3dc"></div>
<div style="position:absolute;left:549px;top:366px;width:1px;height:19px;background:#e7e3dc"></div>
<div style="position:absolute;left:603px;top:366px;width:1px;height:19px;background:#e7e3dc"></div>
<div style="position:absolute;left:664px;top:366px;width:1px;height:19px;background:#e7e3dc"></div>
<div style="position:absolute;left:681px;top:366px;width:1px;height:19px;background:#e7e3dc"></div>
<div style="position:absolute;left:724px;top:366px;width:1px;height:19px;background:#e7e3dc"></div>
<div style="position:absolute;left:758px;top:366px;width:1px;height:19px;background:#e7e3dc"></div>
<div style="position:absolute;left:773px;top:366px;width:1px;height:19px;background:#e7e3dc"></div>
<div style="position:absolute;left:837px;top:366px;width:1px;height:19px;background:#e7e3dc"></div>
<div style="position:absolute;left:870px;top:366px;width:1px;height:19px;background:#e7e3dc"></div>
<div style="position:absolute;left:885px;top:366px;width:1px;height:19px;background:#e7e3dc"></div>
<div style="position:absolute;left:949px;top:366px;width:1px;height:19px;background:#e7e3dc"></div>
<div style="position:absolute;left:1048px;top:366px;width:1px;height:19px;background:#e7e3dc"></div>
<div style="position:absolute;left:1114px;top:366px;width:1px;height:19px;background:#e7e3dc"></div>
<div style="position:absolute;left:1216px;top:366px;width:1px;height:19px;background:#e7e3dc"></div>
<div style="position:absolute;left:1277px;top:366px;width:1px;height:19px;background:#e7e3dc"></div>
<div style="position:absolute;left:96px;top:366px;width:1182px;height:1px;background:#e7e3dc"></div>
<div style="position:absolute;left:665px;top:366px;width:1px;height:19px;background:#555"></div>
<div style="position:absolute;left:983px;top:366px;width:1px;height:19px;background:#555"></div>
<div style="position:absolute;left:103.5px;top:371px;width:8.5px;height:9px;border:1px solid #5a5a5a;border-radius:2px"></div>
<div class="cell" style="left:130px;top:367px;height:19px;font-size:10.5px;color:#444;">11</div>
<div style="left:155px;top:371px;width:9px;height:9px;border:1px solid #555;border-radius:1.5px"><div style="left:1px;top:3px;width:5px;height:1px;background:#555"></div><div style="left:3px;top:1px;width:1px;height:5px;background:#555"></div></div>
<div class="cell" style="left:178px;top:366px;height:19px;font-size:10.2px;color:#33589c;transform:scaleX(0.93);transform-origin:0 0">Порт Мэй</div>
<svg style="position:absolute;left:329px;top:370px" width="11" height="11" viewBox="0 0 11 11"><circle cx="5.5" cy="5.5" r="5" fill="#9c9c9c"/><rect x="4.6" y="2.1" width="1.9" height="1.6" fill="#fff"/><path d="M3.9 4.5 H6.5 V7.9 H7.1 V9 H3.9 V7.9 H4.6 V5.5 H3.9 Z" fill="#fff"/></svg>
<svg style="position:absolute;left:344px;top:368.5px" width="12" height="12" viewBox="0 0 12 12"><path d="M0.6 4.5 H3.2 V2.8 A1.2 1.2 0 0 1 5.6 2.8 V4.5 H7.9 V7.5 H10.5 A1 1 0 0 1 10.5 9.5 H7.9 V11.3 H5.8 V9.8 A1.5 1.5 0 0 0 2.8 9.8 V11.3 H0.6 Z" fill="#9c9c9c"/></svg>
<div class="cell" style="left:366px;top:367px;height:19px;font-size:10px;color:#444;">540</div>
<div class="cell" style="left:431px;top:367px;height:19px;font-size:10px;color:#444;">174</div>
<div class="cell" style="left:474px;top:367px;height:19px;font-size:11px;color:#444;">A</div>
<div class="cell" style="left:506px;top:367px;height:19px;font-size:10px;color:#444;">338</div>
<div class="cell" style="left:557px;top:367px;height:19px;font-size:10px;color:#333;">+6%</div>
<div class="cell" style="left:611px;top:367px;height:19px;font-size:10px;color:#333;">+44%</div>
<div class="cell" style="left:671px;top:367px;height:19px;font-size:8.5px;color:#444;">B</div>
<div class="cell" style="left:689px;top:367px;height:19px;font-size:11px;color:#444;">232</div>
<div class="cell" style="left:730px;top:367px;height:19px;font-size:8.5px;color:#444;">4,4%</div>
<div class="cell" style="left:763px;top:367px;height:19px;font-size:8.5px;color:#444;">B</div>
<div class="cell" style="left:781px;top:367px;height:19px;font-size:11px;color:#444;">118 771</div>
<div class="cell" style="left:843px;top:367px;height:19px;font-size:8.5px;color:#444;">5,5%</div>
<div class="cell" style="left:875px;top:367px;height:19px;font-size:8.5px;color:#444;">B</div>
<div class="cell" style="left:893px;top:367px;height:19px;font-size:11px;color:#444;">78 408</div>
<div class="cell" style="left:955px;top:367px;height:19px;font-size:8.5px;color:#444;">5,8%</div>
<div class="cell" style="left:990px;top:366px;height:19px;font-size:10.2px;color:#444;transform:scaleX(0.92);transform-origin:0 0">Звезды</div>
<div class="cell" style="left:1056px;top:366px;height:19px;font-size:10.2px;color:#444;transform:scaleX(0.92);transform-origin:0 0">Prime</div>
<div class="cell" style="left:1121px;top:366px;height:19px;font-size:10.2px;color:#444;transform:scaleX(0.92);transform-origin:0 0">Золото</div>
<div class="cell" style="left:1223px;top:367px;height:19px;font-size:10.5px;color:#444;">512</div>
<div style="position:absolute;left:96px;top:385px;width:1182px;height:19px;background:#e2e2e2"></div>
<div style="position:absolute;left:550px;top:386px;width:53px;height:18px;background:#b4e4ae"></div>
<div style="position:absolute;left:604px;top:386px;width:60px;height:18px;background:#b4e4ae"></div>
<div style="position:absolute;left:666px;top:386px;width:15px;height:18px;background:#fee683"></div>
<div style="position:absolute;left:682px;top:386px;width:42px;height:18px;background:#fee683"></div>
<div style="position:absolute;left:759px;top:386px;width:14px;height:18px;background:#fddbe6"></div>
<div style="position:absolute;left:774px;top:386px;width:63px;height:18px;background:#fddbe6"></div>
<div style="position:absolute;left:871px;top:386px;width:14px;height:18px;background:#fddbe6"></div>
<div style="position:absolute;left:886px;top:386px;width:63px;height:18px;background:#fddbe6"></div>
<div style="position:absolute;left:984px;top:386px;width:64px;height:18px;background:#f0ae7a"></div>
<div style="position:absolute;left:1049px;top:386px;width:65px;height:18px;background:#f0ae7a"></div>
<div style="position:absolute;left:96px;top:385px;width:1px;height:19px;background:#e7e3dc"></div>
<div style="position:absolute;left:122px;top:385px;width:1px;height:19px;background:#e7e3dc"></div>
<div style="position:absolute;left:171px;top:385px;width:1px;height:19px;background:#e7e3dc"></div>
<div style="position:absolute;left:359px;top:385px;width:1px;height:19px;background:#e7e3dc"></div>
<div style="position:absolute;left:424px;top:385px;width:1px;height:19px;background:#e7e3dc"></div>
<div style="position:absolute;left:466px;top:385px;width:1px;height:19px;background:#e7e3dc"></div>
<div style="position:absolute;left:499px;top:385px;width:1px;height:19px;background:#e7e3dc"></div>
<div style="position:absolute;left:549px;top:385px;width:1px;height:19px;background:#e7e3dc"></div>
<div style="position:absolute;left:603px;top:385px;width:1px;height:19px;background:#e7e3dc"></div>
<div style="position:absolute;left:664px;top:385px;width:1px;height:19px;background:#e7e3dc"></div>
<div style="position:absolute;left:681px;top:385px;width:1px;height:19px;background:#e7e3dc"></div>
<div style="position:absolute;left:724px;top:385px;width:1px;height:19px;background:#e7e3dc"></div>
<div style="position:absolute;left:758px;top:385px;width:1px;height:19px;background:#e7e3dc"></div>
<div style="position:absolute;left:773px;top:385px;width:1px;height:19px;background:#e7e3dc"></div>
<div style="position:absolute;left:837px;top:385px;width:1px;height:19px;background:#e7e3dc"></div>
<div style="position:absolute;left:870px;top:385px;width:1px;height:19px;background:#e7e3dc"></div>
<div style="position:absolute;left:885px;top:385px;width:1px;height:19px;background:#e7e3dc"></div>
<div style="position:absolute;left:949px;top:385px;width:1px;height:19px;background:#e7e3dc"></div>
<div style="position:absolute;left:1048px;top:385px;width:1px;height:19px;background:#e7e3dc"></div>
<div style="position:absolute;left:1114px;top:385px;width:1px;height:19px;background:#e7e3dc"></div>
<div style="position:absolute;left:1216px;top:385px;width:1px;height:19px;background:#e7e3dc"></div>
<div style="position:absolute;left:1277px;top:385px;width:1px;height:19px;background:#e7e3dc"></div>
<div style="position:absolute;left:96px;top:385px;width:1182px;height:1px;background:#e7e3dc"></div>
<div style="position:absolute;left:665px;top:385px;width:1px;height:19px;background:#555"></div>
<div style="position:absolute;left:983px;top:385px;width:1px;height:19px;background:#555"></div>
<div style="position:absolute;left:103.5px;top:390px;width:8.5px;height:9px;border:1px solid #5a5a5a;border-radius:2px"></div>
<div class="cell" style="left:130px;top:386px;height:19px;font-size:10.5px;color:#444;">12</div>
<div style="left:155px;top:390px;width:9px;height:9px;border:1px solid #555;border-radius:1.5px"><div style="left:1px;top:3px;width:5px;height:1px;background:#555"></div><div style="left:3px;top:1px;width:1px;height:5px;background:#555"></div></div>
<div class="cell" style="left:178px;top:385px;height:19px;font-size:10.2px;color:#33589c;transform:scaleX(0.93);transform-origin:0 0">Цезарь (Курица)</div>
<svg style="position:absolute;left:329px;top:389px" width="11" height="11" viewBox="0 0 11 11"><circle cx="5.5" cy="5.5" r="5" fill="#9c9c9c"/><rect x="4.6" y="2.1" width="1.9" height="1.6" fill="#fff"/><path d="M3.9 4.5 H6.5 V7.9 H7.1 V9 H3.9 V7.9 H4.6 V5.5 H3.9 Z" fill="#fff"/></svg>
<svg style="position:absolute;left:344px;top:387.5px" width="12" height="12" viewBox="0 0 12 12"><path d="M0.6 4.5 H3.2 V2.8 A1.2 1.2 0 0 1 5.6 2.8 V4.5 H7.9 V7.5 H10.5 A1 1 0 0 1 10.5 9.5 H7.9 V11.3 H5.8 V9.8 A1.5 1.5 0 0 0 2.8 9.8 V11.3 H0.6 Z" fill="#9c9c9c"/></svg>
<div class="cell" style="left:366px;top:386px;height:19px;font-size:10px;color:#444;">420</div>
<div class="cell" style="left:431px;top:386px;height:19px;font-size:10px;color:#444;">106</div>
<div class="cell" style="left:474px;top:386px;height:19px;font-size:11px;color:#444;">C</div>
<div class="cell" style="left:506px;top:386px;height:19px;font-size:10px;color:#444;">272</div>
<div class="cell" style="left:557px;top:386px;height:19px;font-size:10px;color:#333;">-17%</div>
<div class="cell" style="left:611px;top:386px;height:19px;font-size:10px;color:#333;">+23%</div>
<div class="cell" style="left:671px;top:386px;height:19px;font-size:8.5px;color:#444;">B</div>
<div class="cell" style="left:689px;top:386px;height:19px;font-size:11px;color:#444;">187</div>
<div class="cell" style="left:730px;top:386px;height:19px;font-size:8.5px;color:#444;">3,5%</div>
<div class="cell" style="left:763px;top:386px;height:19px;font-size:8.5px;color:#444;">C</div>
<div class="cell" style="left:781px;top:386px;height:19px;font-size:11px;color:#444;">70 657</div>
<div class="cell" style="left:843px;top:386px;height:19px;font-size:8.5px;color:#444;">3,3%</div>
<div class="cell" style="left:875px;top:386px;height:19px;font-size:8.5px;color:#444;">C</div>
<div class="cell" style="left:893px;top:386px;height:19px;font-size:11px;color:#444;">50 883</div>
<div class="cell" style="left:955px;top:386px;height:19px;font-size:8.5px;color:#444;">3,8%</div>
<div class="cell" style="left:990px;top:385px;height:19px;font-size:10.2px;color:#444;transform:scaleX(0.92);transform-origin:0 0">Загадки</div>
<div class="cell" style="left:1056px;top:385px;height:19px;font-size:10.2px;color:#444;transform:scaleX(0.92);transform-origin:0 0">Sleepers</div>
<div class="cell" style="left:1121px;top:385px;height:19px;font-size:10.2px;color:#444;transform:scaleX(0.92);transform-origin:0 0">Улитки</div>
<div class="cell" style="left:1223px;top:386px;height:19px;font-size:10.5px;color:#444;">378</div>
<div style="position:absolute;left:96px;top:404px;width:1182px;height:19px;background:#fff"></div>
<div style="position:absolute;left:550px;top:405px;width:53px;height:18px;background:#f5a59b"></div>
<div style="position:absolute;left:604px;top:405px;width:60px;height:18px;background:#b4e4ae"></div>
<div style="position:absolute;left:666px;top:405px;width:15px;height:18px;background:#fddbe6"></div>
<div style="position:absolute;left:682px;top:405px;width:42px;height:18px;background:#fddbe6"></div>
<div style="position:absolute;left:759px;top:405px;width:14px;height:18px;background:#63b97b"></div>
<div style="position:absolute;left:774px;top:405px;width:63px;height:18px;background:#63b97b"></div>
<div style="position:absolute;left:871px;top:405px;width:14px;height:18px;background:#63b97b"></div>
<div style="position:absolute;left:886px;top:405px;width:63px;height:18px;background:#63b97b"></div>
<div style="position:absolute;left:984px;top:405px;width:64px;height:18px;background:#f0ae7a"></div>
<div style="position:absolute;left:1049px;top:405px;width:65px;height:18px;background:#afc683"></div>
<div style="position:absolute;left:96px;top:404px;width:1px;height:19px;background:#e7e3dc"></div>
<div style="position:absolute;left:122px;top:404px;width:1px;height:19px;background:#e7e3dc"></div>
<div style="position:absolute;left:171px;top:404px;width:1px;height:19px;background:#e7e3dc"></div>
<div style="position:absolute;left:359px;top:404px;width:1px;height:19px;background:#e7e3dc"></div>
<div style="position:absolute;left:424px;top:404px;width:1px;height:19px;background:#e7e3dc"></div>
<div style="position:absolute;left:466px;top:404px;width:1px;height:19px;background:#e7e3dc"></div>
<div style="position:absolute;left:499px;top:404px;width:1px;height:19px;background:#e7e3dc"></div>
<div style="position:absolute;left:549px;top:404px;width:1px;height:19px;background:#e7e3dc"></div>
<div style="position:absolute;left:603px;top:404px;width:1px;height:19px;background:#e7e3dc"></div>
<div style="position:absolute;left:664px;top:404px;width:1px;height:19px;background:#e7e3dc"></div>
<div style="position:absolute;left:681px;top:404px;width:1px;height:19px;background:#e7e3dc"></div>
<div style="position:absolute;left:724px;top:404px;width:1px;height:19px;background:#e7e3dc"></div>
<div style="position:absolute;left:758px;top:404px;width:1px;height:19px;background:#e7e3dc"></div>
<div style="position:absolute;left:773px;top:404px;width:1px;height:19px;background:#e7e3dc"></div>
<div style="position:absolute;left:837px;top:404px;width:1px;height:19px;background:#e7e3dc"></div>
<div style="position:absolute;left:870px;top:404px;width:1px;height:19px;background:#e7e3dc"></div>
<div style="position:absolute;left:885px;top:404px;width:1px;height:19px;background:#e7e3dc"></div>
<div style="position:absolute;left:949px;top:404px;width:1px;height:19px;background:#e7e3dc"></div>
<div style="position:absolute;left:1048px;top:404px;width:1px;height:19px;background:#e7e3dc"></div>
<div style="position:absolute;left:1114px;top:404px;width:1px;height:19px;background:#e7e3dc"></div>
<div style="position:absolute;left:1216px;top:404px;width:1px;height:19px;background:#e7e3dc"></div>
<div style="position:absolute;left:1277px;top:404px;width:1px;height:19px;background:#e7e3dc"></div>
<div style="position:absolute;left:96px;top:404px;width:1182px;height:1px;background:#e7e3dc"></div>
<div style="position:absolute;left:665px;top:404px;width:1px;height:19px;background:#555"></div>
<div style="position:absolute;left:983px;top:404px;width:1px;height:19px;background:#555"></div>
<div style="position:absolute;left:103.5px;top:409px;width:8.5px;height:9px;border:1px solid #5a5a5a;border-radius:2px"></div>
<div class="cell" style="left:130px;top:405px;height:19px;font-size:10.5px;color:#444;">13</div>
<div class="cell" style="left:178px;top:404px;height:19px;font-size:10.2px;color:#33589c;transform:scaleX(0.93);transform-origin:0 0">Тайо</div>
<svg style="position:absolute;left:329px;top:408px" width="11" height="11" viewBox="0 0 11 11"><circle cx="5.5" cy="5.5" r="5" fill="#9c9c9c"/><rect x="4.6" y="2.1" width="1.9" height="1.6" fill="#fff"/><path d="M3.9 4.5 H6.5 V7.9 H7.1 V9 H3.9 V7.9 H4.6 V5.5 H3.9 Z" fill="#fff"/></svg>
<svg style="position:absolute;left:344px;top:406.5px" width="12" height="12" viewBox="0 0 12 12"><path d="M0.6 4.5 H3.2 V2.8 A1.2 1.2 0 0 1 5.6 2.8 V4.5 H7.9 V7.5 H10.5 A1 1 0 0 1 10.5 9.5 H7.9 V11.3 H5.8 V9.8 A1.5 1.5 0 0 0 2.8 9.8 V11.3 H0.6 Z" fill="#9c9c9c"/></svg>
<div class="cell" style="left:366px;top:405px;height:19px;font-size:10px;color:#444;">890</div>
<div class="cell" style="left:431px;top:405px;height:19px;font-size:10px;color:#444;">303</div>
<div class="cell" style="left:474px;top:405px;height:19px;font-size:11px;color:#444;">A</div>
<div class="cell" style="left:506px;top:405px;height:19px;font-size:10px;color:#444;">572</div>
<div class="cell" style="left:557px;top:405px;height:19px;font-size:10px;color:#333;">+75%</div>
<div class="cell" style="left:611px;top:405px;height:19px;font-size:10px;color:#333;">+131%</div>
<div class="cell" style="left:671px;top:405px;height:19px;font-size:8.5px;color:#444;">C</div>
<div class="cell" style="left:689px;top:405px;height:19px;font-size:11px;color:#444;">160</div>
<div class="cell" style="left:730px;top:405px;height:19px;font-size:8.5px;color:#444;">3%</div>
<div class="cell" style="left:763px;top:405px;height:19px;font-size:8.5px;color:#444;">A</div>
<div class="cell" style="left:781px;top:405px;height:19px;font-size:11px;color:#444;">140 022</div>
<div class="cell" style="left:843px;top:405px;height:19px;font-size:8.5px;color:#444;">6,5%</div>
<div class="cell" style="left:875px;top:405px;height:19px;font-size:8.5px;color:#444;">A</div>
<div class="cell" style="left:893px;top:405px;height:19px;font-size:11px;color:#444;">91 539</div>
<div class="cell" style="left:955px;top:405px;height:19px;font-size:8.5px;color:#444;">6,8%</div>
<div class="cell" style="left:990px;top:404px;height:19px;font-size:10.2px;color:#444;transform:scaleX(0.92);transform-origin:0 0">Загадки</div>
<div class="cell" style="left:1056px;top:404px;height:19px;font-size:10.2px;color:#444;transform:scaleX(0.92);transform-origin:0 0">Prime</div>
<div class="cell" style="left:1121px;top:404px;height:19px;font-size:10.2px;color:#444;transform:scaleX(0.92);transform-origin:0 0">Большие улитки</div>
<div class="cell" style="left:1223px;top:405px;height:19px;font-size:10.5px;color:#444;">875</div>
<div style="position:absolute;left:96px;top:423px;width:1182px;height:19px;background:#e2e2e2"></div>
<div style="position:absolute;left:550px;top:424px;width:53px;height:18px;background:#b4e4ae"></div>
<div style="position:absolute;left:604px;top:424px;width:60px;height:18px;background:#b4e4ae"></div>
<div style="position:absolute;left:666px;top:424px;width:15px;height:18px;background:#fddbe6"></div>
<div style="position:absolute;left:682px;top:424px;width:42px;height:18px;background:#fddbe6"></div>
<div style="position:absolute;left:759px;top:424px;width:14px;height:18px;background:#fddbe6"></div>
<div style="position:absolute;left:774px;top:424px;width:63px;height:18px;background:#fddbe6"></div>
<div style="position:absolute;left:871px;top:424px;width:14px;height:18px;background:#fddbe6"></div>
<div style="position:absolute;left:886px;top:424px;width:63px;height:18px;background:#fddbe6"></div>
<div style="position:absolute;left:984px;top:424px;width:64px;height:18px;background:#f0ae7a"></div>
<div style="position:absolute;left:1049px;top:424px;width:65px;height:18px;background:#f0ae7a"></div>
<div style="position:absolute;left:96px;top:423px;width:1px;height:19px;background:#e7e3dc"></div>
<div style="position:absolute;left:122px;top:423px;width:1px;height:19px;background:#e7e3dc"></div>
<div style="position:absolute;left:171px;top:423px;width:1px;height:19px;background:#e7e3dc"></div>
<div style="position:absolute;left:359px;top:423px;width:1px;height:19px;background:#e7e3dc"></div>
<div style="position:absolute;left:424px;top:423px;width:1px;height:19px;background:#e7e3dc"></div>
<div style="position:absolute;left:466px;top:423px;width:1px;height:19px;background:#e7e3dc"></div>
<div style="position:absolute;left:499px;top:423px;width:1px;height:19px;background:#e7e3dc"></div>
<div style="position:absolute;left:549px;top:423px;width:1px;height:19px;background:#e7e3dc"></div>
<div style="position:absolute;left:603px;top:423px;width:1px;height:19px;background:#e7e3dc"></div>
<div style="position:absolute;left:664px;top:423px;width:1px;height:19px;background:#e7e3dc"></div>
<div style="position:absolute;left:681px;top:423px;width:1px;height:19px;background:#e7e3dc"></div>
<div style="position:absolute;left:724px;top:423px;width:1px;height:19px;background:#e7e3dc"></div>
<div style="position:absolute;left:758px;top:423px;width:1px;height:19px;background:#e7e3dc"></div>
<div style="position:absolute;left:773px;top:423px;width:1px;height:19px;background:#e7e3dc"></div>
<div style="position:absolute;left:837px;top:423px;width:1px;height:19px;background:#e7e3dc"></div>
<div style="position:absolute;left:870px;top:423px;width:1px;height:19px;background:#e7e3dc"></div>
<div style="position:absolute;left:885px;top:423px;width:1px;height:19px;background:#e7e3dc"></div>
<div style="position:absolute;left:949px;top:423px;width:1px;height:19px;background:#e7e3dc"></div>
<div style="position:absolute;left:1048px;top:423px;width:1px;height:19px;background:#e7e3dc"></div>
<div style="position:absolute;left:1114px;top:423px;width:1px;height:19px;background:#e7e3dc"></div>
<div style="position:absolute;left:1216px;top:423px;width:1px;height:19px;background:#e7e3dc"></div>
<div style="position:absolute;left:1277px;top:423px;width:1px;height:19px;background:#e7e3dc"></div>
<div style="position:absolute;left:96px;top:423px;width:1182px;height:1px;background:#e7e3dc"></div>
<div style="position:absolute;left:665px;top:423px;width:1px;height:19px;background:#555"></div>
<div style="position:absolute;left:983px;top:423px;width:1px;height:19px;background:#555"></div>
<div style="position:absolute;left:103.5px;top:428px;width:8.5px;height:9px;border:1px solid #ff5050;border-radius:2px"></div>
<div class="cell" style="left:130px;top:424px;height:19px;font-size:10.5px;color:#ff2222;">14</div>
<div style="left:155px;top:428px;width:9px;height:9px;border:1px solid #ff5050;border-radius:1.5px"><div style="left:1px;top:3px;width:5px;height:1px;background:#ff5050"></div><div style="left:3px;top:1px;width:1px;height:5px;background:#ff5050"></div></div>
<div class="cell" style="left:178px;top:423px;height:19px;font-size:10.2px;color:#33589c;transform:scaleX(0.93);transform-origin:0 0">Мояма</div>
<svg style="position:absolute;left:329px;top:427px" width="11" height="11" viewBox="0 0 11 11"><circle cx="5.5" cy="5.5" r="5" fill="#ff5b6b"/><rect x="4.6" y="2.1" width="1.9" height="1.6" fill="#fff"/><path d="M3.9 4.5 H6.5 V7.9 H7.1 V9 H3.9 V7.9 H4.6 V5.5 H3.9 Z" fill="#fff"/></svg>
<svg style="position:absolute;left:344px;top:425.5px" width="12" height="12" viewBox="0 0 12 12"><path d="M0.6 4.5 H3.2 V2.8 A1.2 1.2 0 0 1 5.6 2.8 V4.5 H7.9 V7.5 H10.5 A1 1 0 0 1 10.5 9.5 H7.9 V11.3 H5.8 V9.8 A1.5 1.5 0 0 0 2.8 9.8 V11.3 H0.6 Z" fill="#ff5b6b"/></svg>
<div class="cell" style="left:366px;top:424px;height:19px;font-size:10px;color:#ff2222;">450</div>
<div class="cell" style="left:431px;top:424px;height:19px;font-size:10px;color:#ff2222;">118</div>
<div class="cell" style="left:474px;top:424px;height:19px;font-size:11px;color:#ff2222;">B</div>
<div class="cell" style="left:506px;top:424px;height:19px;font-size:10px;color:#ff2222;">308</div>
<div class="cell" style="left:557px;top:424px;height:19px;font-size:10px;color:#333;">-11%</div>
<div class="cell" style="left:611px;top:424px;height:19px;font-size:10px;color:#333;">+30%</div>
<div class="cell" style="left:671px;top:424px;height:19px;font-size:8.5px;color:#ff2222;">C</div>
<div class="cell" style="left:689px;top:424px;height:19px;font-size:11px;color:#ff2222;">145</div>
<div class="cell" style="left:730px;top:424px;height:19px;font-size:8.5px;color:#ff2222;">2,7%</div>
<div class="cell" style="left:763px;top:424px;height:19px;font-size:8.5px;color:#ff2222;">C</div>
<div class="cell" style="left:781px;top:424px;height:19px;font-size:11px;color:#ff2222;">61 868</div>
<div class="cell" style="left:843px;top:424px;height:19px;font-size:8.5px;color:#ff2222;">2,9%</div>
<div class="cell" style="left:875px;top:424px;height:19px;font-size:8.5px;color:#ff2222;">C</div>
<div class="cell" style="left:893px;top:424px;height:19px;font-size:11px;color:#ff2222;">44 721</div>
<div class="cell" style="left:955px;top:424px;height:19px;font-size:8.5px;color:#ff2222;">3,3%</div>
<div class="cell" style="left:990px;top:423px;height:19px;font-size:10.2px;color:#ff2222;transform:scaleX(0.92);transform-origin:0 0">Загадки</div>
<div class="cell" style="left:1056px;top:423px;height:19px;font-size:10.2px;color:#ff2222;transform:scaleX(0.92);transform-origin:0 0">Sleepers</div>
<div class="cell" style="left:1121px;top:423px;height:19px;font-size:10.2px;color:#ff2222;transform:scaleX(0.92);transform-origin:0 0">Улитки</div>
<div class="cell" style="left:1223px;top:424px;height:19px;font-size:10.5px;color:#ff2222;">427</div>
<div style="position:absolute;left:96px;top:442px;width:1182px;height:19px;background:#fff"></div>
<div style="position:absolute;left:550px;top:443px;width:53px;height:18px;background:#b4e4ae"></div>
<div style="position:absolute;left:604px;top:443px;width:60px;height:18px;background:#b4e4ae"></div>
<div style="position:absolute;left:666px;top:443px;width:15px;height:18px;background:#fddbe6"></div>
<div style="position:absolute;left:682px;top:443px;width:42px;height:18px;background:#fddbe6"></div>
<div style="position:absolute;left:759px;top:443px;width:14px;height:18px;background:#fddbe6"></div>
<div style="position:absolute;left:774px;top:443px;width:63px;height:18px;background:#fddbe6"></div>
<div style="position:absolute;left:871px;top:443px;width:14px;height:18px;background:#fddbe6"></div>
<div style="position:absolute;left:886px;top:443px;width:63px;height:18px;background:#fddbe6"></div>
<div style="position:absolute;left:984px;top:443px;width:64px;height:18px;background:#f0ae7a"></div>
<div style="position:absolute;left:1049px;top:443px;width:65px;height:18px;background:#f0ae7a"></div>
<div style="position:absolute;left:96px;top:442px;width:1px;height:19px;background:#e7e3dc"></div>
<div style="position:absolute;left:122px;top:442px;width:1px;height:19px;background:#e7e3dc"></div>
<div style="position:absolute;left:171px;top:442px;width:1px;height:19px;background:#e7e3dc"></div>
<div style="position:absolute;left:359px;top:442px;width:1px;height:19px;background:#e7e3dc"></div>
<div style="position:absolute;left:424px;top:442px;width:1px;height:19px;background:#e7e3dc"></div>
<div style="position:absolute;left:466px;top:442px;width:1px;height:19px;background:#e7e3dc"></div>
<div style="position:absolute;left:499px;top:442px;width:1px;height:19px;background:#e7e3dc"></div>
<div style="position:absolute;left:549px;top:442px;width:1px;height:19px;background:#e7e3dc"></div>
<div style="position:absolute;left:603px;top:442px;width:1px;height:19px;background:#e7e3dc"></div>
<div style="position:absolute;left:664px;top:442px;width:1px;height:19px;background:#e7e3dc"></div>
<div style="position:absolute;left:681px;top:442px;width:1px;height:19px;background:#e7e3dc"></div>
<div style="position:absolute;left:724px;top:442px;width:1px;height:19px;background:#e7e3dc"></div>
<div style="position:absolute;left:758px;top:442px;width:1px;height:19px;background:#e7e3dc"></div>
<div style="position:absolute;left:773px;top:442px;width:1px;height:19px;background:#e7e3dc"></div>
<div style="position:absolute;left:837px;top:442px;width:1px;height:19px;background:#e7e3dc"></div>
<div style="position:absolute;left:870px;top:442px;width:1px;height:19px;background:#e7e3dc"></div>
<div style="position:absolute;left:885px;top:442px;width:1px;height:19px;background:#e7e3dc"></div>
<div style="position:absolute;left:949px;top:442px;width:1px;height:19px;background:#e7e3dc"></div>
<div style="position:absolute;left:1048px;top:442px;width:1px;height:19px;background:#e7e3dc"></div>
<div style="position:absolute;left:1114px;top:442px;width:1px;height:19px;background:#e7e3dc"></div>
<div style="position:absolute;left:1216px;top:442px;width:1px;height:19px;background:#e7e3dc"></div>
<div style="position:absolute;left:1277px;top:442px;width:1px;height:19px;background:#e7e3dc"></div>
<div style="position:absolute;left:96px;top:442px;width:1182px;height:1px;background:#e7e3dc"></div>
<div style="position:absolute;left:665px;top:442px;width:1px;height:19px;background:#555"></div>
<div style="position:absolute;left:983px;top:442px;width:1px;height:19px;background:#555"></div>
<div style="position:absolute;left:103.5px;top:447px;width:8.5px;height:9px;border:1px solid #ff5050;border-radius:2px"></div>
<div class="cell" style="left:130px;top:443px;height:19px;font-size:10.5px;color:#ff2222;">15</div>
<div style="left:155px;top:447px;width:9px;height:9px;border:1px solid #ff5050;border-radius:1.5px"><div style="left:1px;top:3px;width:5px;height:1px;background:#ff5050"></div><div style="left:3px;top:1px;width:1px;height:5px;background:#ff5050"></div></div>
<div class="cell" style="left:178px;top:442px;height:19px;font-size:10.2px;color:#33589c;transform:scaleX(0.93);transform-origin:0 0">Крит</div>
<svg style="position:absolute;left:329px;top:446px" width="11" height="11" viewBox="0 0 11 11"><circle cx="5.5" cy="5.5" r="5" fill="#ff5b6b"/><rect x="4.6" y="2.1" width="1.9" height="1.6" fill="#fff"/><path d="M3.9 4.5 H6.5 V7.9 H7.1 V9 H3.9 V7.9 H4.6 V5.5 H3.9 Z" fill="#fff"/></svg>
<svg style="position:absolute;left:344px;top:444.5px" width="12" height="12" viewBox="0 0 12 12"><path d="M0.6 4.5 H3.2 V2.8 A1.2 1.2 0 0 1 5.6 2.8 V4.5 H7.9 V7.5 H10.5 A1 1 0 0 1 10.5 9.5 H7.9 V11.3 H5.8 V9.8 A1.5 1.5 0 0 0 2.8 9.8 V11.3 H0.6 Z" fill="#ff5b6b"/></svg>
<div class="cell" style="left:366px;top:443px;height:19px;font-size:10px;color:#ff2222;">480</div>
<div class="cell" style="left:431px;top:443px;height:19px;font-size:10px;color:#ff2222;">116</div>
<div class="cell" style="left:474px;top:443px;height:19px;font-size:11px;color:#ff2222;">A</div>
<div class="cell" style="left:506px;top:443px;height:19px;font-size:10px;color:#ff2222;">341</div>
<div class="cell" style="left:557px;top:443px;height:19px;font-size:10px;color:#333;">-5%</div>
<div class="cell" style="left:611px;top:443px;height:19px;font-size:10px;color:#333;">+43%</div>
<div class="cell" style="left:671px;top:443px;height:19px;font-size:8.5px;color:#ff2222;">C</div>
<div class="cell" style="left:689px;top:443px;height:19px;font-size:11px;color:#ff2222;">144</div>
<div class="cell" style="left:730px;top:443px;height:19px;font-size:8.5px;color:#ff2222;">2,7%</div>
<div class="cell" style="left:763px;top:443px;height:19px;font-size:8.5px;color:#ff2222;">C</div>
<div class="cell" style="left:781px;top:443px;height:19px;font-size:11px;color:#ff2222;">65 764</div>
<div class="cell" style="left:843px;top:443px;height:19px;font-size:8.5px;color:#ff2222;">3%</div>
<div class="cell" style="left:875px;top:443px;height:19px;font-size:8.5px;color:#ff2222;">C</div>
<div class="cell" style="left:893px;top:443px;height:19px;font-size:11px;color:#ff2222;">49 132</div>
<div class="cell" style="left:955px;top:443px;height:19px;font-size:8.5px;color:#ff2222;">3,6%</div>
<div class="cell" style="left:990px;top:442px;height:19px;font-size:10.2px;color:#ff2222;transform:scaleX(0.92);transform-origin:0 0">Загадки</div>
<div class="cell" style="left:1056px;top:442px;height:19px;font-size:10.2px;color:#ff2222;transform:scaleX(0.92);transform-origin:0 0">Sleepers</div>
<div class="cell" style="left:1121px;top:442px;height:19px;font-size:10.2px;color:#ff2222;transform:scaleX(0.92);transform-origin:0 0">Улитки</div>
<div class="cell" style="left:1223px;top:443px;height:19px;font-size:10.5px;color:#ff2222;">457</div>
<div style="position:absolute;left:96px;top:461px;width:1182px;height:19px;background:#e2e2e2"></div>
<div style="position:absolute;left:550px;top:462px;width:53px;height:18px;background:#f5a59b"></div>
<div style="position:absolute;left:604px;top:462px;width:60px;height:18px;background:#b4e4ae"></div>
<div style="position:absolute;left:666px;top:462px;width:15px;height:18px;background:#fddbe6"></div>
<div style="position:absolute;left:682px;top:462px;width:42px;height:18px;background:#fddbe6"></div>
<div style="position:absolute;left:759px;top:462px;width:14px;height:18px;background:#fddbe6"></div>
<div style="position:absolute;left:774px;top:462px;width:63px;height:18px;background:#fddbe6"></div>
<div style="position:absolute;left:871px;top:462px;width:14px;height:18px;background:#fddbe6"></div>
<div style="position:absolute;left:886px;top:462px;width:63px;height:18px;background:#fddbe6"></div>
<div style="position:absolute;left:984px;top:462px;width:64px;height:18px;background:#f0ae7a"></div>
<div style="position:absolute;left:1049px;top:462px;width:65px;height:18px;background:#f0ae7a"></div>
<div style="position:absolute;left:96px;top:461px;width:1px;height:19px;background:#e7e3dc"></div>
<div style="position:absolute;left:122px;top:461px;width:1px;height:19px;background:#e7e3dc"></div>
<div style="position:absolute;left:171px;top:461px;width:1px;height:19px;background:#e7e3dc"></div>
<div style="position:absolute;left:359px;top:461px;width:1px;height:19px;background:#e7e3dc"></div>
<div style="position:absolute;left:424px;top:461px;width:1px;height:19px;background:#e7e3dc"></div>
<div style="position:absolute;left:466px;top:461px;width:1px;height:19px;background:#e7e3dc"></div>
<div style="position:absolute;left:499px;top:461px;width:1px;height:19px;background:#e7e3dc"></div>
<div style="position:absolute;left:549px;top:461px;width:1px;height:19px;background:#e7e3dc"></div>
<div style="position:absolute;left:603px;top:461px;width:1px;height:19px;background:#e7e3dc"></div>
<div style="position:absolute;left:664px;top:461px;width:1px;height:19px;background:#e7e3dc"></div>
<div style="position:absolute;left:681px;top:461px;width:1px;height:19px;background:#e7e3dc"></div>
<div style="position:absolute;left:724px;top:461px;width:1px;height:19px;background:#e7e3dc"></div>
<div style="position:absolute;left:758px;top:461px;width:1px;height:19px;background:#e7e3dc"></div>
<div style="position:absolute;left:773px;top:461px;width:1px;height:19px;background:#e7e3dc"></div>
<div style="position:absolute;left:837px;top:461px;width:1px;height:19px;background:#e7e3dc"></div>
<div style="position:absolute;left:870px;top:461px;width:1px;height:19px;background:#e7e3dc"></div>
<div style="position:absolute;left:885px;top:461px;width:1px;height:19px;background:#e7e3dc"></div>
<div style="position:absolute;left:949px;top:461px;width:1px;height:19px;background:#e7e3dc"></div>
<div style="position:absolute;left:1048px;top:461px;width:1px;height:19px;background:#e7e3dc"></div>
<div style="position:absolute;left:1114px;top:461px;width:1px;height:19px;background:#e7e3dc"></div>
<div style="position:absolute;left:1216px;top:461px;width:1px;height:19px;background:#e7e3dc"></div>
<div style="position:absolute;left:1277px;top:461px;width:1px;height:19px;background:#e7e3dc"></div>
<div style="position:absolute;left:96px;top:461px;width:1182px;height:1px;background:#e7e3dc"></div>
<div style="position:absolute;left:665px;top:461px;width:1px;height:19px;background:#555"></div>
<div style="position:absolute;left:983px;top:461px;width:1px;height:19px;background:#555"></div>
<div style="position:absolute;left:103.5px;top:466px;width:8.5px;height:9px;border:1px solid #ff5050;border-radius:2px"></div>
<div class="cell" style="left:130px;top:462px;height:19px;font-size:10.5px;color:#ff2222;">16</div>
<div class="cell" style="left:178px;top:461px;height:19px;font-size:10.2px;color:#33589c;transform:scaleX(0.93);transform-origin:0 0">Цезарь (креветка)</div>
<svg style="position:absolute;left:329px;top:465px" width="11" height="11" viewBox="0 0 11 11"><circle cx="5.5" cy="5.5" r="5" fill="#ff5b6b"/><rect x="4.6" y="2.1" width="1.9" height="1.6" fill="#fff"/><path d="M3.9 4.5 H6.5 V7.9 H7.1 V9 H3.9 V7.9 H4.6 V5.5 H3.9 Z" fill="#fff"/></svg>
<svg style="position:absolute;left:344px;top:463.5px" width="12" height="12" viewBox="0 0 12 12"><path d="M0.6 4.5 H3.2 V2.8 A1.2 1.2 0 0 1 5.6 2.8 V4.5 H7.9 V7.5 H10.5 A1 1 0 0 1 10.5 9.5 H7.9 V11.3 H5.8 V9.8 A1.5 1.5 0 0 0 2.8 9.8 V11.3 H0.6 Z" fill="#ff5b6b"/></svg>
<div class="cell" style="left:366px;top:462px;height:19px;font-size:10px;color:#ff2222;">540</div>
<div class="cell" style="left:431px;top:462px;height:19px;font-size:10px;color:#ff2222;">144</div>
<div class="cell" style="left:474px;top:462px;height:19px;font-size:11px;color:#ff2222;">A</div>
<div class="cell" style="left:506px;top:462px;height:19px;font-size:10px;color:#ff2222;">372</div>
<div class="cell" style="left:557px;top:462px;height:19px;font-size:10px;color:#333;">+6%</div>
<div class="cell" style="left:611px;top:462px;height:19px;font-size:10px;color:#333;">+55%</div>
<div class="cell" style="left:671px;top:462px;height:19px;font-size:8.5px;color:#ff2222;">C</div>
<div class="cell" style="left:689px;top:462px;height:19px;font-size:11px;color:#ff2222;">130</div>
<div class="cell" style="left:730px;top:462px;height:19px;font-size:8.5px;color:#ff2222;">2,5%</div>
<div class="cell" style="left:763px;top:462px;height:19px;font-size:8.5px;color:#ff2222;">C</div>
<div class="cell" style="left:781px;top:462px;height:19px;font-size:11px;color:#ff2222;">67 074</div>
<div class="cell" style="left:843px;top:462px;height:19px;font-size:8.5px;color:#ff2222;">3,1%</div>
<div class="cell" style="left:875px;top:462px;height:19px;font-size:8.5px;color:#ff2222;">C</div>
<div class="cell" style="left:893px;top:462px;height:19px;font-size:11px;color:#ff2222;">48 317</div>
<div class="cell" style="left:955px;top:462px;height:19px;font-size:8.5px;color:#ff2222;">3,6%</div>
<div class="cell" style="left:990px;top:461px;height:19px;font-size:10.2px;color:#ff2222;transform:scaleX(0.92);transform-origin:0 0">Загадки</div>
<div class="cell" style="left:1056px;top:461px;height:19px;font-size:10.2px;color:#ff2222;transform:scaleX(0.92);transform-origin:0 0">Sleepers</div>
<div class="cell" style="left:1121px;top:461px;height:19px;font-size:10.2px;color:#ff2222;transform:scaleX(0.92);transform-origin:0 0">Улитки</div>
<div class="cell" style="left:1223px;top:462px;height:19px;font-size:10.5px;color:#ff2222;">516</div>
<div style="position:absolute;left:96px;top:480px;width:1182px;height:19px;background:#fff"></div>
<div style="position:absolute;left:550px;top:481px;width:53px;height:18px;background:#f5a59b"></div>
<div style="position:absolute;left:604px;top:481px;width:60px;height:18px;background:#b4e4ae"></div>
<div style="position:absolute;left:666px;top:481px;width:15px;height:18px;background:#fddbe6"></div>
<div style="position:absolute;left:682px;top:481px;width:42px;height:18px;background:#fddbe6"></div>
<div style="position:absolute;left:759px;top:481px;width:14px;height:18px;background:#fee683"></div>
<div style="position:absolute;left:774px;top:481px;width:63px;height:18px;background:#fee683"></div>
<div style="position:absolute;left:871px;top:481px;width:14px;height:18px;background:#fddbe6"></div>
<div style="position:absolute;left:886px;top:481px;width:63px;height:18px;background:#fddbe6"></div>
<div style="position:absolute;left:984px;top:481px;width:64px;height:18px;background:#f0ae7a"></div>
<div style="position:absolute;left:96px;top:480px;width:1px;height:19px;background:#e7e3dc"></div>
<div style="position:absolute;left:122px;top:480px;width:1px;height:19px;background:#e7e3dc"></div>
<div style="position:absolute;left:171px;top:480px;width:1px;height:19px;background:#e7e3dc"></div>
<div style="position:absolute;left:359px;top:480px;width:1px;height:19px;background:#e7e3dc"></div>
<div style="position:absolute;left:424px;top:480px;width:1px;height:19px;background:#e7e3dc"></div>
<div style="position:absolute;left:466px;top:480px;width:1px;height:19px;background:#e7e3dc"></div>
<div style="position:absolute;left:499px;top:480px;width:1px;height:19px;background:#e7e3dc"></div>
<div style="position:absolute;left:549px;top:480px;width:1px;height:19px;background:#e7e3dc"></div>
<div style="position:absolute;left:603px;top:480px;width:1px;height:19px;background:#e7e3dc"></div>
<div style="position:absolute;left:664px;top:480px;width:1px;height:19px;background:#e7e3dc"></div>
<div style="position:absolute;left:681px;top:480px;width:1px;height:19px;background:#e7e3dc"></div>
<div style="position:absolute;left:724px;top:480px;width:1px;height:19px;background:#e7e3dc"></div>
<div style="position:absolute;left:758px;top:480px;width:1px;height:19px;background:#e7e3dc"></div>
<div style="position:absolute;left:773px;top:480px;width:1px;height:19px;background:#e7e3dc"></div>
<div style="position:absolute;left:837px;top:480px;width:1px;height:19px;background:#e7e3dc"></div>
<div style="position:absolute;left:870px;top:480px;width:1px;height:19px;background:#e7e3dc"></div>
<div style="position:absolute;left:885px;top:480px;width:1px;height:19px;background:#e7e3dc"></div>
<div style="position:absolute;left:949px;top:480px;width:1px;height:19px;background:#e7e3dc"></div>
<div style="position:absolute;left:1048px;top:480px;width:1px;height:19px;background:#e7e3dc"></div>
<div style="position:absolute;left:1114px;top:480px;width:1px;height:19px;background:#e7e3dc"></div>
<div style="position:absolute;left:1216px;top:480px;width:1px;height:19px;background:#e7e3dc"></div>
<div style="position:absolute;left:1277px;top:480px;width:1px;height:19px;background:#e7e3dc"></div>
<div style="position:absolute;left:96px;top:480px;width:1182px;height:1px;background:#e7e3dc"></div>
<div style="position:absolute;left:665px;top:480px;width:1px;height:19px;background:#555"></div>
<div style="position:absolute;left:983px;top:480px;width:1px;height:19px;background:#555"></div>
<div style="position:absolute;left:103.5px;top:485px;width:8.5px;height:9px;border:1px solid #5a5a5a;border-radius:2px"></div>
<div class="cell" style="left:130px;top:481px;height:19px;font-size:10.5px;color:#444;">17</div>
<div style="left:155px;top:485px;width:9px;height:9px;border:1px solid #555;border-radius:1.5px"><div style="left:1px;top:3px;width:5px;height:1px;background:#555"></div><div style="left:3px;top:1px;width:1px;height:5px;background:#555"></div></div>
<div class="cell" style="left:178px;top:480px;height:19px;font-size:10.2px;color:#33589c;transform:scaleX(0.93);transform-origin:0 0">Фирудо с гребешком</div>
<svg style="position:absolute;left:329px;top:484px" width="11" height="11" viewBox="0 0 11 11"><circle cx="5.5" cy="5.5" r="5" fill="#9c9c9c"/><rect x="4.6" y="2.1" width="1.9" height="1.6" fill="#fff"/><path d="M3.9 4.5 H6.5 V7.9 H7.1 V9 H3.9 V7.9 H4.6 V5.5 H3.9 Z" fill="#fff"/></svg>
<svg style="position:absolute;left:344px;top:482.5px" width="12" height="12" viewBox="0 0 12 12"><path d="M0.6 4.5 H3.2 V2.8 A1.2 1.2 0 0 1 5.6 2.8 V4.5 H7.9 V7.5 H10.5 A1 1 0 0 1 10.5 9.5 H7.9 V11.3 H5.8 V9.8 A1.5 1.5 0 0 0 2.8 9.8 V11.3 H0.6 Z" fill="#9c9c9c"/></svg>
<div class="cell" style="left:366px;top:481px;height:19px;font-size:10px;color:#444;">890</div>
<div class="cell" style="left:431px;top:481px;height:19px;font-size:10px;color:#444;">392</div>
<div class="cell" style="left:474px;top:481px;height:19px;font-size:11px;color:#444;">A</div>
<div class="cell" style="left:506px;top:481px;height:19px;font-size:10px;color:#444;">453</div>
<div class="cell" style="left:557px;top:481px;height:19px;font-size:10px;color:#333;">+75%</div>
<div class="cell" style="left:611px;top:481px;height:19px;font-size:10px;color:#333;">+96%</div>
<div class="cell" style="left:671px;top:481px;height:19px;font-size:8.5px;color:#444;">C</div>
<div class="cell" style="left:689px;top:481px;height:19px;font-size:11px;color:#444;">107</div>
<div class="cell" style="left:730px;top:481px;height:19px;font-size:8.5px;color:#444;">2%</div>
<div class="cell" style="left:763px;top:481px;height:19px;font-size:8.5px;color:#444;">B</div>
<div class="cell" style="left:781px;top:481px;height:19px;font-size:11px;color:#444;">90 403</div>
<div class="cell" style="left:843px;top:481px;height:19px;font-size:8.5px;color:#444;">4,2%</div>
<div class="cell" style="left:875px;top:481px;height:19px;font-size:8.5px;color:#444;">C</div>
<div class="cell" style="left:893px;top:481px;height:19px;font-size:11px;color:#444;">48 445</div>
<div class="cell" style="left:955px;top:481px;height:19px;font-size:8.5px;color:#444;">3,6%</div>
<div class="cell" style="left:990px;top:480px;height:19px;font-size:10.2px;color:#444;transform:scaleX(0.92);transform-origin:0 0">Загадки</div>
<div class="cell" style="left:1056px;top:480px;height:19px;font-size:10.2px;color:#444;transform:scaleX(0.92);transform-origin:0 0">Problems</div>
<div class="cell" style="left:1121px;top:480px;height:19px;font-size:10.2px;color:#444;transform:scaleX(0.92);transform-origin:0 0">Сумоист</div>
<div class="cell" style="left:1223px;top:481px;height:19px;font-size:10.5px;color:#444;">845</div>
<div style="position:absolute;left:96px;top:499px;width:1182px;height:19px;background:#e2e2e2"></div>
<div style="position:absolute;left:550px;top:500px;width:53px;height:18px;background:#f5a59b"></div>
<div style="position:absolute;left:604px;top:500px;width:60px;height:18px;background:#b4e4ae"></div>
<div style="position:absolute;left:666px;top:500px;width:15px;height:18px;background:#fddbe6"></div>
<div style="position:absolute;left:682px;top:500px;width:42px;height:18px;background:#fddbe6"></div>
<div style="position:absolute;left:759px;top:500px;width:14px;height:18px;background:#fddbe6"></div>
<div style="position:absolute;left:774px;top:500px;width:63px;height:18px;background:#fddbe6"></div>
<div style="position:absolute;left:871px;top:500px;width:14px;height:18px;background:#fddbe6"></div>
<div style="position:absolute;left:886px;top:500px;width:63px;height:18px;background:#fddbe6"></div>
<div style="position:absolute;left:984px;top:500px;width:64px;height:18px;background:#f0ae7a"></div>
<div style="position:absolute;left:1049px;top:500px;width:65px;height:18px;background:#f0ae7a"></div>
<div style="position:absolute;left:96px;top:499px;width:1px;height:19px;background:#e7e3dc"></div>
<div style="position:absolute;left:122px;top:499px;width:1px;height:19px;background:#e7e3dc"></div>
<div style="position:absolute;left:171px;top:499px;width:1px;height:19px;background:#e7e3dc"></div>
<div style="position:absolute;left:359px;top:499px;width:1px;height:19px;background:#e7e3dc"></div>
<div style="position:absolute;left:424px;top:499px;width:1px;height:19px;background:#e7e3dc"></div>
<div style="position:absolute;left:466px;top:499px;width:1px;height:19px;background:#e7e3dc"></div>
<div style="position:absolute;left:499px;top:499px;width:1px;height:19px;background:#e7e3dc"></div>
<div style="position:absolute;left:549px;top:499px;width:1px;height:19px;background:#e7e3dc"></div>
<div style="position:absolute;left:603px;top:499px;width:1px;height:19px;background:#e7e3dc"></div>
<div style="position:absolute;left:664px;top:499px;width:1px;height:19px;background:#e7e3dc"></div>
<div style="position:absolute;left:681px;top:499px;width:1px;height:19px;background:#e7e3dc"></div>
<div style="position:absolute;left:724px;top:499px;width:1px;height:19px;background:#e7e3dc"></div>
<div style="position:absolute;left:758px;top:499px;width:1px;height:19px;background:#e7e3dc"></div>
<div style="position:absolute;left:773px;top:499px;width:1px;height:19px;background:#e7e3dc"></div>
<div style="position:absolute;left:837px;top:499px;width:1px;height:19px;background:#e7e3dc"></div>
<div style="position:absolute;left:870px;top:499px;width:1px;height:19px;background:#e7e3dc"></div>
<div style="position:absolute;left:885px;top:499px;width:1px;height:19px;background:#e7e3dc"></div>
<div style="position:absolute;left:949px;top:499px;width:1px;height:19px;background:#e7e3dc"></div>
<div style="position:absolute;left:1048px;top:499px;width:1px;height:19px;background:#e7e3dc"></div>
<div style="position:absolute;left:1114px;top:499px;width:1px;height:19px;background:#e7e3dc"></div>
<div style="position:absolute;left:1216px;top:499px;width:1px;height:19px;background:#e7e3dc"></div>
<div style="position:absolute;left:1277px;top:499px;width:1px;height:19px;background:#e7e3dc"></div>
<div style="position:absolute;left:96px;top:499px;width:1182px;height:1px;background:#e7e3dc"></div>
<div style="position:absolute;left:665px;top:499px;width:1px;height:19px;background:#555"></div>
<div style="position:absolute;left:983px;top:499px;width:1px;height:19px;background:#555"></div>
<div style="position:absolute;left:103.5px;top:504px;width:8.5px;height:9px;border:1px solid #ff5050;border-radius:2px"></div>
<div class="cell" style="left:130px;top:500px;height:19px;font-size:10.5px;color:#ff2222;">18</div>
<div class="cell" style="left:178px;top:499px;height:19px;font-size:10.2px;color:#33589c;transform:scaleX(0.93);transform-origin:0 0">Гриль-салат с уткой</div>
<svg style="position:absolute;left:329px;top:503px" width="11" height="11" viewBox="0 0 11 11"><circle cx="5.5" cy="5.5" r="5" fill="#ff5b6b"/><rect x="4.6" y="2.1" width="1.9" height="1.6" fill="#fff"/><path d="M3.9 4.5 H6.5 V7.9 H7.1 V9 H3.9 V7.9 H4.6 V5.5 H3.9 Z" fill="#fff"/></svg>
<svg style="position:absolute;left:344px;top:501.5px" width="12" height="12" viewBox="0 0 12 12"><path d="M0.6 4.5 H3.2 V2.8 A1.2 1.2 0 0 1 5.6 2.8 V4.5 H7.9 V7.5 H10.5 A1 1 0 0 1 10.5 9.5 H7.9 V11.3 H5.8 V9.8 A1.5 1.5 0 0 0 2.8 9.8 V11.3 H0.6 Z" fill="#ff5b6b"/></svg>
<div class="cell" style="left:366px;top:500px;height:19px;font-size:10px;color:#ff2222;">520</div>
<div class="cell" style="left:431px;top:500px;height:19px;font-size:10px;color:#ff2222;">194</div>
<div class="cell" style="left:474px;top:500px;height:19px;font-size:11px;color:#ff2222;">B</div>
<div class="cell" style="left:506px;top:500px;height:19px;font-size:10px;color:#ff2222;">299</div>
<div class="cell" style="left:557px;top:500px;height:19px;font-size:10px;color:#333;">+2%</div>
<div class="cell" style="left:611px;top:500px;height:19px;font-size:10px;color:#333;">+28%</div>
<div class="cell" style="left:671px;top:500px;height:19px;font-size:8.5px;color:#ff2222;">C</div>
<div class="cell" style="left:689px;top:500px;height:19px;font-size:11px;color:#ff2222;">94</div>
<div class="cell" style="left:730px;top:500px;height:19px;font-size:8.5px;color:#ff2222;">1,8%</div>
<div class="cell" style="left:763px;top:500px;height:19px;font-size:8.5px;color:#ff2222;">C</div>
<div class="cell" style="left:781px;top:500px;height:19px;font-size:11px;color:#ff2222;">46 321</div>
<div class="cell" style="left:843px;top:500px;height:19px;font-size:8.5px;color:#ff2222;">2,1%</div>
<div class="cell" style="left:875px;top:500px;height:19px;font-size:8.5px;color:#ff2222;">C</div>
<div class="cell" style="left:893px;top:500px;height:19px;font-size:11px;color:#ff2222;">28 128</div>
<div class="cell" style="left:955px;top:500px;height:19px;font-size:8.5px;color:#ff2222;">2,1%</div>
<div class="cell" style="left:990px;top:499px;height:19px;font-size:10.2px;color:#ff2222;transform:scaleX(0.92);transform-origin:0 0">Загадки</div>
<div class="cell" style="left:1056px;top:499px;height:19px;font-size:10.2px;color:#ff2222;transform:scaleX(0.92);transform-origin:0 0">Sleepers</div>
<div class="cell" style="left:1121px;top:499px;height:19px;font-size:10.2px;color:#ff2222;transform:scaleX(0.92);transform-origin:0 0">Улитки</div>
<div class="cell" style="left:1223px;top:500px;height:19px;font-size:10.5px;color:#ff2222;">493</div>
<div style="position:absolute;left:96px;top:518px;width:1182px;height:19px;background:#fff"></div>
<div style="position:absolute;left:550px;top:519px;width:53px;height:18px;background:#f5a59b"></div>
<div style="position:absolute;left:604px;top:519px;width:60px;height:18px;background:#b4e4ae"></div>
<div style="position:absolute;left:666px;top:519px;width:15px;height:18px;background:#fddbe6"></div>
<div style="position:absolute;left:682px;top:519px;width:42px;height:18px;background:#fddbe6"></div>
<div style="position:absolute;left:759px;top:519px;width:14px;height:18px;background:#fddbe6"></div>
<div style="position:absolute;left:774px;top:519px;width:63px;height:18px;background:#fddbe6"></div>
<div style="position:absolute;left:871px;top:519px;width:14px;height:18px;background:#fddbe6"></div>
<div style="position:absolute;left:886px;top:519px;width:63px;height:18px;background:#fddbe6"></div>
<div style="position:absolute;left:984px;top:519px;width:64px;height:18px;background:#f0ae7a"></div>
<div style="position:absolute;left:1049px;top:519px;width:65px;height:18px;background:#f0ae7a"></div>
<div style="position:absolute;left:96px;top:518px;width:1px;height:19px;background:#e7e3dc"></div>
<div style="position:absolute;left:122px;top:518px;width:1px;height:19px;background:#e7e3dc"></div>
<div style="position:absolute;left:171px;top:518px;width:1px;height:19px;background:#e7e3dc"></div>
<div style="position:absolute;left:359px;top:518px;width:1px;height:19px;background:#e7e3dc"></div>
<div style="position:absolute;left:424px;top:518px;width:1px;height:19px;background:#e7e3dc"></div>
<div style="position:absolute;left:466px;top:518px;width:1px;height:19px;background:#e7e3dc"></div>
<div style="position:absolute;left:499px;top:518px;width:1px;height:19px;background:#e7e3dc"></div>
<div style="position:absolute;left:549px;top:518px;width:1px;height:19px;background:#e7e3dc"></div>
<div style="position:absolute;left:603px;top:518px;width:1px;height:19px;background:#e7e3dc"></div>
<div style="position:absolute;left:664px;top:518px;width:1px;height:19px;background:#e7e3dc"></div>
<div style="position:absolute;left:681px;top:518px;width:1px;height:19px;background:#e7e3dc"></div>
<div style="position:absolute;left:724px;top:518px;width:1px;height:19px;background:#e7e3dc"></div>
<div style="position:absolute;left:758px;top:518px;width:1px;height:19px;background:#e7e3dc"></div>
<div style="position:absolute;left:773px;top:518px;width:1px;height:19px;background:#e7e3dc"></div>
<div style="position:absolute;left:837px;top:518px;width:1px;height:19px;background:#e7e3dc"></div>
<div style="position:absolute;left:870px;top:518px;width:1px;height:19px;background:#e7e3dc"></div>
<div style="position:absolute;left:885px;top:518px;width:1px;height:19px;background:#e7e3dc"></div>
<div style="position:absolute;left:949px;top:518px;width:1px;height:19px;background:#e7e3dc"></div>
<div style="position:absolute;left:1048px;top:518px;width:1px;height:19px;background:#e7e3dc"></div>
<div style="position:absolute;left:1114px;top:518px;width:1px;height:19px;background:#e7e3dc"></div>
<div style="position:absolute;left:1216px;top:518px;width:1px;height:19px;background:#e7e3dc"></div>
<div style="position:absolute;left:1277px;top:518px;width:1px;height:19px;background:#e7e3dc"></div>
<div style="position:absolute;left:96px;top:518px;width:1182px;height:1px;background:#e7e3dc"></div>
<div style="position:absolute;left:665px;top:518px;width:1px;height:19px;background:#555"></div>
<div style="position:absolute;left:983px;top:518px;width:1px;height:19px;background:#555"></div>
<div style="position:absolute;left:103.5px;top:523px;width:8.5px;height:9px;border:1px solid #ff5050;border-radius:2px"></div>
<div class="cell" style="left:130px;top:519px;height:19px;font-size:10.5px;color:#ff2222;">19</div>
<div class="cell" style="left:178px;top:518px;height:19px;font-size:10.2px;color:#33589c;transform:scaleX(0.93);transform-origin:0 0">Рока Акор</div>
<svg style="position:absolute;left:329px;top:522px" width="11" height="11" viewBox="0 0 11 11"><circle cx="5.5" cy="5.5" r="5" fill="#ff5b6b"/><rect x="4.6" y="2.1" width="1.9" height="1.6" fill="#fff"/><path d="M3.9 4.5 H6.5 V7.9 H7.1 V9 H3.9 V7.9 H4.6 V5.5 H3.9 Z" fill="#fff"/></svg>
<svg style="position:absolute;left:344px;top:520.5px" width="12" height="12" viewBox="0 0 12 12"><path d="M0.6 4.5 H3.2 V2.8 A1.2 1.2 0 0 1 5.6 2.8 V4.5 H7.9 V7.5 H10.5 A1 1 0 0 1 10.5 9.5 H7.9 V11.3 H5.8 V9.8 A1.5 1.5 0 0 0 2.8 9.8 V11.3 H0.6 Z" fill="#ff5b6b"/></svg>
<div class="cell" style="left:366px;top:519px;height:19px;font-size:10px;color:#ff2222;">550</div>
<div class="cell" style="left:431px;top:519px;height:19px;font-size:10px;color:#ff2222;">168</div>
<div class="cell" style="left:474px;top:519px;height:19px;font-size:11px;color:#ff2222;">A</div>
<div class="cell" style="left:506px;top:519px;height:19px;font-size:10px;color:#ff2222;">354</div>
<div class="cell" style="left:557px;top:519px;height:19px;font-size:10px;color:#333;">+8%</div>
<div class="cell" style="left:611px;top:519px;height:19px;font-size:10px;color:#333;">+50%</div>
<div class="cell" style="left:671px;top:519px;height:19px;font-size:8.5px;color:#ff2222;">C</div>
<div class="cell" style="left:689px;top:519px;height:19px;font-size:11px;color:#ff2222;">76</div>
<div class="cell" style="left:730px;top:519px;height:19px;font-size:8.5px;color:#ff2222;">1,4%</div>
<div class="cell" style="left:763px;top:519px;height:19px;font-size:8.5px;color:#ff2222;">C</div>
<div class="cell" style="left:781px;top:519px;height:19px;font-size:11px;color:#ff2222;">39 711</div>
<div class="cell" style="left:843px;top:519px;height:19px;font-size:8.5px;color:#ff2222;">1,8%</div>
<div class="cell" style="left:875px;top:519px;height:19px;font-size:8.5px;color:#ff2222;">C</div>
<div class="cell" style="left:893px;top:519px;height:19px;font-size:11px;color:#ff2222;">26 906</div>
<div class="cell" style="left:955px;top:519px;height:19px;font-size:8.5px;color:#ff2222;">2%</div>
<div class="cell" style="left:990px;top:518px;height:19px;font-size:10.2px;color:#ff2222;transform:scaleX(0.92);transform-origin:0 0">Загадки</div>
<div class="cell" style="left:1056px;top:518px;height:19px;font-size:10.2px;color:#ff2222;transform:scaleX(0.92);transform-origin:0 0">Sleepers</div>
<div class="cell" style="left:1121px;top:518px;height:19px;font-size:10.2px;color:#ff2222;transform:scaleX(0.92);transform-origin:0 0">Улитки</div>
<div class="cell" style="left:1223px;top:519px;height:19px;font-size:10.5px;color:#ff2222;">523</div>
<div style="position:absolute;left:96px;top:537px;width:1182px;height:19px;background:#e2e2e2"></div>
<div style="position:absolute;left:550px;top:538px;width:53px;height:18px;background:#b4e4ae"></div>
<div style="position:absolute;left:604px;top:538px;width:60px;height:18px;background:#b4e4ae"></div>
<div style="position:absolute;left:666px;top:538px;width:15px;height:18px;background:#fddbe6"></div>
<div style="position:absolute;left:682px;top:538px;width:42px;height:18px;background:#fddbe6"></div>
<div style="position:absolute;left:759px;top:538px;width:14px;height:18px;background:#fddbe6"></div>
<div style="position:absolute;left:774px;top:538px;width:63px;height:18px;background:#fddbe6"></div>
<div style="position:absolute;left:871px;top:538px;width:14px;height:18px;background:#fddbe6"></div>
<div style="position:absolute;left:886px;top:538px;width:63px;height:18px;background:#fddbe6"></div>
<div style="position:absolute;left:1049px;top:538px;width:65px;height:18px;background:#f0ae7a"></div>
<div style="position:absolute;left:96px;top:537px;width:1px;height:19px;background:#e7e3dc"></div>
<div style="position:absolute;left:122px;top:537px;width:1px;height:19px;background:#e7e3dc"></div>
<div style="position:absolute;left:171px;top:537px;width:1px;height:19px;background:#e7e3dc"></div>
<div style="position:absolute;left:359px;top:537px;width:1px;height:19px;background:#e7e3dc"></div>
<div style="position:absolute;left:424px;top:537px;width:1px;height:19px;background:#e7e3dc"></div>
<div style="position:absolute;left:466px;top:537px;width:1px;height:19px;background:#e7e3dc"></div>
<div style="position:absolute;left:499px;top:537px;width:1px;height:19px;background:#e7e3dc"></div>
<div style="position:absolute;left:549px;top:537px;width:1px;height:19px;background:#e7e3dc"></div>
<div style="position:absolute;left:603px;top:537px;width:1px;height:19px;background:#e7e3dc"></div>
<div style="position:absolute;left:664px;top:537px;width:1px;height:19px;background:#e7e3dc"></div>
<div style="position:absolute;left:681px;top:537px;width:1px;height:19px;background:#e7e3dc"></div>
<div style="position:absolute;left:724px;top:537px;width:1px;height:19px;background:#e7e3dc"></div>
<div style="position:absolute;left:758px;top:537px;width:1px;height:19px;background:#e7e3dc"></div>
<div style="position:absolute;left:773px;top:537px;width:1px;height:19px;background:#e7e3dc"></div>
<div style="position:absolute;left:837px;top:537px;width:1px;height:19px;background:#e7e3dc"></div>
<div style="position:absolute;left:870px;top:537px;width:1px;height:19px;background:#e7e3dc"></div>
<div style="position:absolute;left:885px;top:537px;width:1px;height:19px;background:#e7e3dc"></div>
<div style="position:absolute;left:949px;top:537px;width:1px;height:19px;background:#e7e3dc"></div>
<div style="position:absolute;left:1048px;top:537px;width:1px;height:19px;background:#e7e3dc"></div>
<div style="position:absolute;left:1114px;top:537px;width:1px;height:19px;background:#e7e3dc"></div>
<div style="position:absolute;left:1216px;top:537px;width:1px;height:19px;background:#e7e3dc"></div>
<div style="position:absolute;left:1277px;top:537px;width:1px;height:19px;background:#e7e3dc"></div>
<div style="position:absolute;left:96px;top:537px;width:1182px;height:1px;background:#e7e3dc"></div>
<div style="position:absolute;left:665px;top:537px;width:1px;height:19px;background:#555"></div>
<div style="position:absolute;left:983px;top:537px;width:1px;height:19px;background:#555"></div>
<div style="position:absolute;left:103.5px;top:542px;width:8.5px;height:9px;border:1px solid #ff5050;border-radius:2px"></div>
<div class="cell" style="left:130px;top:538px;height:19px;font-size:10.5px;color:#ff2222;">20</div>
<div class="cell" style="left:178px;top:537px;height:19px;font-size:10.2px;color:#33589c;transform:scaleX(0.93);transform-origin:0 0">Хияше Вакаме</div>
<svg style="position:absolute;left:329px;top:541px" width="11" height="11" viewBox="0 0 11 11"><circle cx="5.5" cy="5.5" r="5" fill="#ff5b6b"/><rect x="4.6" y="2.1" width="1.9" height="1.6" fill="#fff"/><path d="M3.9 4.5 H6.5 V7.9 H7.1 V9 H3.9 V7.9 H4.6 V5.5 H3.9 Z" fill="#fff"/></svg>
<svg style="position:absolute;left:344px;top:539.5px" width="12" height="12" viewBox="0 0 12 12"><path d="M0.6 4.5 H3.2 V2.8 A1.2 1.2 0 0 1 5.6 2.8 V4.5 H7.9 V7.5 H10.5 A1 1 0 0 1 10.5 9.5 H7.9 V11.3 H5.8 V9.8 A1.5 1.5 0 0 0 2.8 9.8 V11.3 H0.6 Z" fill="#ff5b6b"/></svg>
<div class="cell" style="left:366px;top:538px;height:19px;font-size:10px;color:#ff2222;">350</div>
<div class="cell" style="left:431px;top:538px;height:19px;font-size:10px;color:#ff2222;">50</div>
<div class="cell" style="left:474px;top:538px;height:19px;font-size:11px;color:#ff2222;">C</div>
<div class="cell" style="left:506px;top:538px;height:19px;font-size:10px;color:#ff2222;">249</div>
<div class="cell" style="left:557px;top:538px;height:19px;font-size:10px;color:#333;">-31%</div>
<div class="cell" style="left:611px;top:538px;height:19px;font-size:10px;color:#333;">+18%</div>
<div class="cell" style="left:671px;top:538px;height:19px;font-size:8.5px;color:#ff2222;">C</div>
<div class="cell" style="left:689px;top:538px;height:19px;font-size:11px;color:#ff2222;">27</div>
<div class="cell" style="left:730px;top:538px;height:19px;font-size:8.5px;color:#ff2222;">0,5%</div>
<div class="cell" style="left:763px;top:538px;height:19px;font-size:8.5px;color:#ff2222;">C</div>
<div class="cell" style="left:781px;top:538px;height:19px;font-size:11px;color:#ff2222;">8 079</div>
<div class="cell" style="left:843px;top:538px;height:19px;font-size:8.5px;color:#ff2222;">0,4%</div>
<div class="cell" style="left:875px;top:538px;height:19px;font-size:8.5px;color:#ff2222;">C</div>
<div class="cell" style="left:893px;top:538px;height:19px;font-size:11px;color:#ff2222;">6 722</div>
<div class="cell" style="left:955px;top:538px;height:19px;font-size:8.5px;color:#ff2222;">0,5%</div>
<div class="cell" style="left:990px;top:537px;height:19px;font-size:10.2px;color:#ff2222;transform:scaleX(0.92);transform-origin:0 0">Собаки</div>
<div class="cell" style="left:1056px;top:537px;height:19px;font-size:10.2px;color:#ff2222;transform:scaleX(0.92);transform-origin:0 0">Sleepers</div>
<div class="cell" style="left:1121px;top:537px;height:19px;font-size:10.2px;color:#ff2222;transform:scaleX(0.92);transform-origin:0 0">Надежда</div>
<div class="cell" style="left:1223px;top:538px;height:19px;font-size:10.5px;color:#ff2222;">299</div>
<div style="position:absolute;left:96px;top:556px;width:1182px;height:3px;background:#e7e3dc"></div>
<div style="position:absolute;left:665px;top:556px;width:1px;height:3px;background:#555"></div>
<div style="position:absolute;left:983px;top:556px;width:1px;height:3px;background:#555"></div>
<div style="position:absolute;left:1309px;top:98px;width:17px;height:460px;background:#f1f1f1"></div>
<div style="left:1313px;top:104px;width:0;height:0;border-left:4.5px solid transparent;border-right:4.5px solid transparent;border-bottom:4.5px solid #a3a3a3"></div>
<div style="position:absolute;left:1311px;top:115px;width:13px;height:434px;background:#c1c1c1"></div>
<div style="position:absolute;left:1346px;top:0px;width:12px;height:558px;background:#f1f1f1;z-index:10"></div>
<div style="left:1348px;top:7px;width:0;height:0;border-left:4.5px solid transparent;border-right:4.5px solid transparent;border-bottom:4.5px solid #505050;z-index:11"></div>
<div style="position:absolute;left:1348px;top:32px;width:10px;height:29px;background:#c1c1c1;z-index:11"></div>
<div style="position:absolute;left:664px;top:98px;width:452px;height:81px;border:4px solid #e00000;border-radius:3px;z-index:8"></div>
</body></html>
